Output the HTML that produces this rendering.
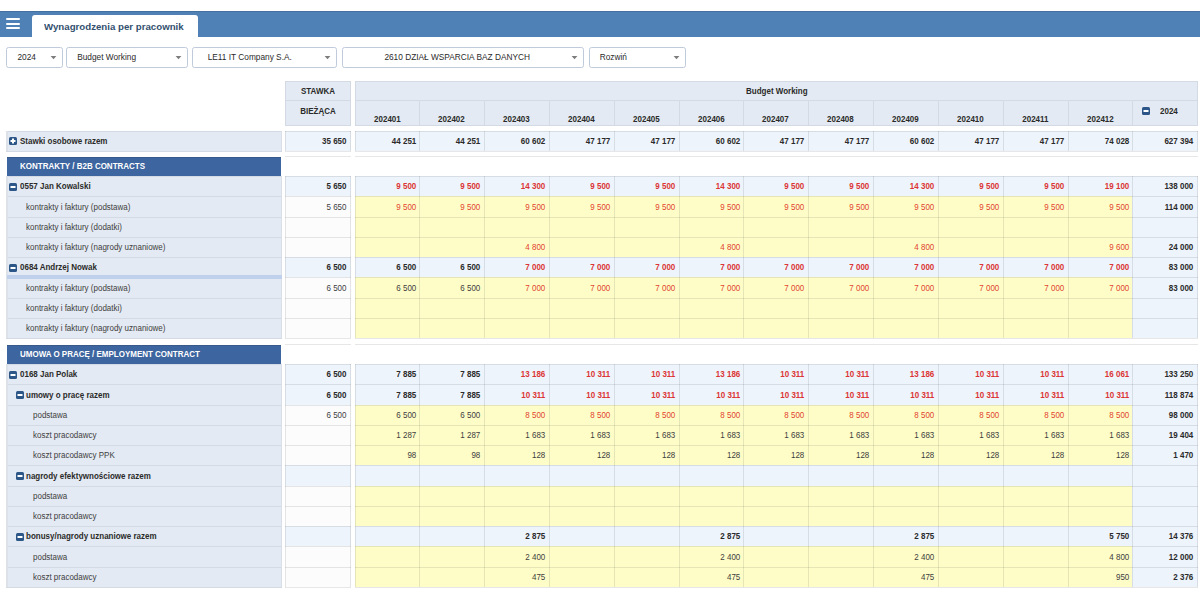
<!DOCTYPE html><html><head><meta charset="utf-8"><style>html,body{margin:0;padding:0}body{width:1200px;height:600px;overflow:hidden;background:#fff;position:relative;font-family:"Liberation Sans", sans-serif}.a{position:absolute}</style></head><body><div class="a" style="left:0.00px;top:11.00px;width:1200.00px;height:26.00px;background:#4f80b6;border-top:1px solid #44709f;box-sizing:border-box"></div>
<div class="a" style="left:6.00px;top:18.00px;width:13.50px;height:2.40px;background:#fff;border-radius:1px"></div>
<div class="a" style="left:6.00px;top:22.50px;width:13.50px;height:2.40px;background:#fff;border-radius:1px"></div>
<div class="a" style="left:6.00px;top:26.80px;width:13.50px;height:2.40px;background:#fff;border-radius:1px"></div>
<div class="a" style="left:32.00px;top:15.00px;width:166.00px;height:22.00px;background:#fff;border-radius:3px 3px 0 0"></div>
<div class="a" style="left:44.00px;top:16.20px;width:150.00px;height:22.00px;font-weight:bold;font-size:9.9px;transform:scaleX(0.98);transform-origin:left 50%;line-height:22px;color:#33506f;white-space:nowrap">Wynagrodzenia per pracownik</div>
<div class="a" style="left:6.00px;top:47.00px;width:57.00px;height:21.00px;border:1px solid #bfcadb;border-radius:2.5px;box-sizing:border-box;background:#fff"></div>
<div class="a" style="left:17.50px;top:47.00px;width:300.00px;height:21.00px;font-size:8.3px;line-height:21px;color:#2a2a2a;white-space:nowrap">2024</div>
<svg class="a" style="left:49.70px;top:55px" width="7" height="5"><path d="M0.6 1 L6.4 1 L3.5 4.2 Z" fill="#7d7d7d"/></svg>
<div class="a" style="left:66.00px;top:47.00px;width:122.00px;height:21.00px;border:1px solid #bfcadb;border-radius:2.5px;box-sizing:border-box;background:#fff"></div>
<div class="a" style="left:77.20px;top:47.00px;width:300.00px;height:21.00px;font-size:8.3px;line-height:21px;color:#2a2a2a;white-space:nowrap">Budget Working</div>
<svg class="a" style="left:174.70px;top:55px" width="7" height="5"><path d="M0.6 1 L6.4 1 L3.5 4.2 Z" fill="#7d7d7d"/></svg>
<div class="a" style="left:192.00px;top:47.00px;width:145.00px;height:21.00px;border:1px solid #bfcadb;border-radius:2.5px;box-sizing:border-box;background:#fff"></div>
<div class="a" style="left:207.70px;top:47.00px;width:300.00px;height:21.00px;font-size:8.3px;line-height:21px;color:#2a2a2a;white-space:nowrap">LE11 IT Company S.A.</div>
<svg class="a" style="left:323.70px;top:55px" width="7" height="5"><path d="M0.6 1 L6.4 1 L3.5 4.2 Z" fill="#7d7d7d"/></svg>
<div class="a" style="left:342.00px;top:47.00px;width:242.00px;height:21.00px;border:1px solid #bfcadb;border-radius:2.5px;box-sizing:border-box;background:#fff"></div>
<div class="a" style="left:384.40px;top:47.00px;width:300.00px;height:21.00px;font-size:8.3px;line-height:21px;color:#2a2a2a;white-space:nowrap">2610 DZIAŁ WSPARCIA BAZ DANYCH</div>
<svg class="a" style="left:570.70px;top:55px" width="7" height="5"><path d="M0.6 1 L6.4 1 L3.5 4.2 Z" fill="#7d7d7d"/></svg>
<div class="a" style="left:589.00px;top:47.00px;width:97.00px;height:21.00px;border:1px solid #bfcadb;border-radius:2.5px;box-sizing:border-box;background:#fff"></div>
<div class="a" style="left:599.70px;top:47.00px;width:300.00px;height:21.00px;font-size:8.3px;line-height:21px;color:#2a2a2a;white-space:nowrap">Rozwiń</div>
<svg class="a" style="left:672.70px;top:55px" width="7" height="5"><path d="M0.6 1 L6.4 1 L3.5 4.2 Z" fill="#7d7d7d"/></svg>
<div class="a" style="left:285px;top:81px;width:66px;height:45px;background:#e4eaf3"></div>
<div class="a" style="left:355px;top:81px;width:843px;height:45px;background:#e4eaf3"></div>
<div class="a" style="left:285px;top:81px;width:66px;height:1px;background:#d3dae4"></div>
<div class="a" style="left:285px;top:100px;width:66px;height:1px;background:#d3dae4"></div>
<div class="a" style="left:285px;top:125px;width:66px;height:1px;background:#d3dae4"></div>
<div class="a" style="left:285px;top:81px;width:1px;height:45px;background:#d3dae4"></div>
<div class="a" style="left:350px;top:81px;width:1px;height:45px;background:#d3dae4"></div>
<div class="a" style="left:355px;top:81px;width:843px;height:1px;background:#d3dae4"></div>
<div class="a" style="left:355px;top:100px;width:843px;height:1px;background:#d3dae4"></div>
<div class="a" style="left:355px;top:125px;width:843px;height:1px;background:#d3dae4"></div>
<div class="a" style="left:355px;top:81px;width:1px;height:45px;background:#d3dae4"></div>
<div class="a" style="left:1197px;top:81px;width:1px;height:45px;background:#d3dae4"></div>
<div class="a" style="left:419px;top:100px;width:1px;height:25px;background:#d3dae4"></div>
<div class="a" style="left:484px;top:100px;width:1px;height:25px;background:#d3dae4"></div>
<div class="a" style="left:549px;top:100px;width:1px;height:25px;background:#d3dae4"></div>
<div class="a" style="left:614px;top:100px;width:1px;height:25px;background:#d3dae4"></div>
<div class="a" style="left:679px;top:100px;width:1px;height:25px;background:#d3dae4"></div>
<div class="a" style="left:743px;top:100px;width:1px;height:25px;background:#d3dae4"></div>
<div class="a" style="left:808px;top:100px;width:1px;height:25px;background:#d3dae4"></div>
<div class="a" style="left:873px;top:100px;width:1px;height:25px;background:#d3dae4"></div>
<div class="a" style="left:938px;top:100px;width:1px;height:25px;background:#d3dae4"></div>
<div class="a" style="left:1003px;top:100px;width:1px;height:25px;background:#d3dae4"></div>
<div class="a" style="left:1068px;top:100px;width:1px;height:25px;background:#d3dae4"></div>
<div class="a" style="left:1132px;top:100px;width:1px;height:25px;background:#d3dae4"></div>
<div class="a" style="left:285.00px;top:81.49px;width:66.00px;height:20.00px;font-weight:bold;font-size:8.45px;transform:scaleX(0.947);transform-origin:center 50%;color:#2a2a2a;text-align:center;white-space:nowrap;line-height:20px">STAWKA</div>
<div class="a" style="left:285.00px;top:101.49px;width:66.00px;height:20.00px;font-weight:bold;font-size:8.45px;transform:scaleX(0.947);transform-origin:center 50%;color:#2a2a2a;text-align:center;white-space:nowrap;line-height:20px">BIEŻĄCA</div>
<div class="a" style="left:354.50px;top:81.39px;width:843.66px;height:20.00px;font-weight:bold;font-size:8.45px;transform:scaleX(0.947);transform-origin:center 50%;color:#2a2a2a;text-align:center;white-space:nowrap;line-height:20px">Budget Working</div>
<div class="a" style="left:354.50px;top:109.49px;width:64.82px;height:20.00px;font-weight:bold;font-size:8.45px;transform:scaleX(0.947);transform-origin:center 50%;color:#2a2a2a;text-align:center;white-space:nowrap;line-height:20px">202401</div>
<div class="a" style="left:419.32px;top:109.49px;width:64.82px;height:20.00px;font-weight:bold;font-size:8.45px;transform:scaleX(0.947);transform-origin:center 50%;color:#2a2a2a;text-align:center;white-space:nowrap;line-height:20px">202402</div>
<div class="a" style="left:484.14px;top:109.49px;width:64.82px;height:20.00px;font-weight:bold;font-size:8.45px;transform:scaleX(0.947);transform-origin:center 50%;color:#2a2a2a;text-align:center;white-space:nowrap;line-height:20px">202403</div>
<div class="a" style="left:548.96px;top:109.49px;width:64.82px;height:20.00px;font-weight:bold;font-size:8.45px;transform:scaleX(0.947);transform-origin:center 50%;color:#2a2a2a;text-align:center;white-space:nowrap;line-height:20px">202404</div>
<div class="a" style="left:613.78px;top:109.49px;width:64.82px;height:20.00px;font-weight:bold;font-size:8.45px;transform:scaleX(0.947);transform-origin:center 50%;color:#2a2a2a;text-align:center;white-space:nowrap;line-height:20px">202405</div>
<div class="a" style="left:678.60px;top:109.49px;width:64.82px;height:20.00px;font-weight:bold;font-size:8.45px;transform:scaleX(0.947);transform-origin:center 50%;color:#2a2a2a;text-align:center;white-space:nowrap;line-height:20px">202406</div>
<div class="a" style="left:743.42px;top:109.49px;width:64.82px;height:20.00px;font-weight:bold;font-size:8.45px;transform:scaleX(0.947);transform-origin:center 50%;color:#2a2a2a;text-align:center;white-space:nowrap;line-height:20px">202407</div>
<div class="a" style="left:808.24px;top:109.49px;width:64.82px;height:20.00px;font-weight:bold;font-size:8.45px;transform:scaleX(0.947);transform-origin:center 50%;color:#2a2a2a;text-align:center;white-space:nowrap;line-height:20px">202408</div>
<div class="a" style="left:873.06px;top:109.49px;width:64.82px;height:20.00px;font-weight:bold;font-size:8.45px;transform:scaleX(0.947);transform-origin:center 50%;color:#2a2a2a;text-align:center;white-space:nowrap;line-height:20px">202409</div>
<div class="a" style="left:937.88px;top:109.49px;width:64.82px;height:20.00px;font-weight:bold;font-size:8.45px;transform:scaleX(0.947);transform-origin:center 50%;color:#2a2a2a;text-align:center;white-space:nowrap;line-height:20px">202410</div>
<div class="a" style="left:1002.70px;top:109.49px;width:64.82px;height:20.00px;font-weight:bold;font-size:8.45px;transform:scaleX(0.947);transform-origin:center 50%;color:#2a2a2a;text-align:center;white-space:nowrap;line-height:20px">202411</div>
<div class="a" style="left:1067.52px;top:109.49px;width:64.82px;height:20.00px;font-weight:bold;font-size:8.45px;transform:scaleX(0.947);transform-origin:center 50%;color:#2a2a2a;text-align:center;white-space:nowrap;line-height:20px">202412</div>
<svg class="a" style="left:1142px;top:107px" width="8" height="8" viewBox="0 0 8 8"><rect x="0" y="0" width="8" height="8" rx="1.5" fill="#2b5687"/><rect x="1.5" y="3" width="5" height="2" fill="#fff"/></svg>
<div class="a" style="left:1159.50px;top:100.99px;width:40.00px;height:20.00px;font-weight:bold;font-size:8.45px;transform:scaleX(0.947);transform-origin:left 50%;color:#2a2a2a;text-align:center;white-space:nowrap;text-align:left;line-height:20px">2024</div>
<div class="a" style="left:6px;top:131px;width:276px;height:20px;background:#e4eaf3"></div>
<div class="a" style="left:8px;top:131px;width:274px;height:1px;background:#d3dae4"></div>
<div class="a" style="left:6px;top:131px;width:2px;height:20px;background:#dde2e9"></div>
<div class="a" style="left:281px;top:131px;width:1px;height:20px;background:#d9dfe8"></div>
<svg class="a" style="left:9px;top:137px" width="8" height="8" viewBox="0 0 8 8"><rect x="0" y="0" width="8" height="8" rx="1.5" fill="#2b5687"/><rect x="1.5" y="3" width="5" height="2" fill="#fff"/><rect x="3" y="1.5" width="2" height="5" fill="#fff"/></svg>
<div class="a" style="left:20.40px;top:131.19px;width:250.00px;height:20.00px;font-weight:bold;color:#2a2a2a;font-size:8.45px;transform:scaleX(0.947);transform-origin:left 50%;white-space:nowrap;line-height:20px">Stawki osobowe razem</div>
<div class="a" style="left:285px;top:131px;width:66px;height:20px;background:#eef4fc"></div>
<div class="a" style="left:285px;top:131px;width:66px;height:1px;background:rgba(0,0,0,0.095)"></div>
<div class="a" style="left:285px;top:131px;width:1px;height:20px;background:rgba(0,0,0,0.095)"></div>
<div class="a" style="left:350px;top:131px;width:1px;height:20px;background:rgba(0,0,0,0.095)"></div>
<div class="a" style="left:285.00px;top:131.19px;width:61.50px;height:20.00px;font-size:8.45px;transform:scaleX(0.947);transform-origin:right 50%;white-space:nowrap;text-align:right;font-weight:bold;color:#2a2a2a;line-height:20px">35 650</div>
<div class="a" style="left:355px;top:131px;width:777px;height:20px;background:#eef4fc"></div>
<div class="a" style="left:1132px;top:131px;width:66px;height:20px;background:#eef4fc"></div>
<div class="a" style="left:355px;top:131px;width:843px;height:1px;background:rgba(0,0,0,0.095)"></div>
<div class="a" style="left:355px;top:131px;width:1px;height:20px;background:rgba(0,0,0,0.095)"></div>
<div class="a" style="left:419px;top:131px;width:1px;height:20px;background:rgba(0,0,0,0.095)"></div>
<div class="a" style="left:484px;top:131px;width:1px;height:20px;background:rgba(0,0,0,0.095)"></div>
<div class="a" style="left:549px;top:131px;width:1px;height:20px;background:rgba(0,0,0,0.095)"></div>
<div class="a" style="left:614px;top:131px;width:1px;height:20px;background:rgba(0,0,0,0.095)"></div>
<div class="a" style="left:679px;top:131px;width:1px;height:20px;background:rgba(0,0,0,0.095)"></div>
<div class="a" style="left:743px;top:131px;width:1px;height:20px;background:rgba(0,0,0,0.095)"></div>
<div class="a" style="left:808px;top:131px;width:1px;height:20px;background:rgba(0,0,0,0.095)"></div>
<div class="a" style="left:873px;top:131px;width:1px;height:20px;background:rgba(0,0,0,0.095)"></div>
<div class="a" style="left:938px;top:131px;width:1px;height:20px;background:rgba(0,0,0,0.095)"></div>
<div class="a" style="left:1003px;top:131px;width:1px;height:20px;background:rgba(0,0,0,0.095)"></div>
<div class="a" style="left:1068px;top:131px;width:1px;height:20px;background:rgba(0,0,0,0.095)"></div>
<div class="a" style="left:1132px;top:131px;width:1px;height:20px;background:rgba(0,0,0,0.095)"></div>
<div class="a" style="left:1197px;top:131px;width:1px;height:20px;background:rgba(0,0,0,0.095)"></div>
<div class="a" style="left:354.50px;top:131.19px;width:61.32px;height:20.00px;font-size:8.45px;transform:scaleX(0.947);transform-origin:right 50%;white-space:nowrap;text-align:right;font-weight:bold;color:#2a2a2a;line-height:20px">44 251</div>
<div class="a" style="left:419.32px;top:131.19px;width:61.32px;height:20.00px;font-size:8.45px;transform:scaleX(0.947);transform-origin:right 50%;white-space:nowrap;text-align:right;font-weight:bold;color:#2a2a2a;line-height:20px">44 251</div>
<div class="a" style="left:484.14px;top:131.19px;width:61.32px;height:20.00px;font-size:8.45px;transform:scaleX(0.947);transform-origin:right 50%;white-space:nowrap;text-align:right;font-weight:bold;color:#2a2a2a;line-height:20px">60 602</div>
<div class="a" style="left:548.96px;top:131.19px;width:61.32px;height:20.00px;font-size:8.45px;transform:scaleX(0.947);transform-origin:right 50%;white-space:nowrap;text-align:right;font-weight:bold;color:#2a2a2a;line-height:20px">47 177</div>
<div class="a" style="left:613.78px;top:131.19px;width:61.32px;height:20.00px;font-size:8.45px;transform:scaleX(0.947);transform-origin:right 50%;white-space:nowrap;text-align:right;font-weight:bold;color:#2a2a2a;line-height:20px">47 177</div>
<div class="a" style="left:678.60px;top:131.19px;width:61.32px;height:20.00px;font-size:8.45px;transform:scaleX(0.947);transform-origin:right 50%;white-space:nowrap;text-align:right;font-weight:bold;color:#2a2a2a;line-height:20px">60 602</div>
<div class="a" style="left:743.42px;top:131.19px;width:61.32px;height:20.00px;font-size:8.45px;transform:scaleX(0.947);transform-origin:right 50%;white-space:nowrap;text-align:right;font-weight:bold;color:#2a2a2a;line-height:20px">47 177</div>
<div class="a" style="left:808.24px;top:131.19px;width:61.32px;height:20.00px;font-size:8.45px;transform:scaleX(0.947);transform-origin:right 50%;white-space:nowrap;text-align:right;font-weight:bold;color:#2a2a2a;line-height:20px">47 177</div>
<div class="a" style="left:873.06px;top:131.19px;width:61.32px;height:20.00px;font-size:8.45px;transform:scaleX(0.947);transform-origin:right 50%;white-space:nowrap;text-align:right;font-weight:bold;color:#2a2a2a;line-height:20px">60 602</div>
<div class="a" style="left:937.88px;top:131.19px;width:61.32px;height:20.00px;font-size:8.45px;transform:scaleX(0.947);transform-origin:right 50%;white-space:nowrap;text-align:right;font-weight:bold;color:#2a2a2a;line-height:20px">47 177</div>
<div class="a" style="left:1002.70px;top:131.19px;width:61.32px;height:20.00px;font-size:8.45px;transform:scaleX(0.947);transform-origin:right 50%;white-space:nowrap;text-align:right;font-weight:bold;color:#2a2a2a;line-height:20px">47 177</div>
<div class="a" style="left:1067.52px;top:131.19px;width:61.32px;height:20.00px;font-size:8.45px;transform:scaleX(0.947);transform-origin:right 50%;white-space:nowrap;text-align:right;font-weight:bold;color:#2a2a2a;line-height:20px">74 028</div>
<div class="a" style="left:1132.34px;top:131.19px;width:61.32px;height:20.00px;font-size:8.45px;transform:scaleX(0.947);transform-origin:right 50%;white-space:nowrap;text-align:right;font-weight:bold;color:#2a2a2a;line-height:20px">627 394</div>
<div class="a" style="left:7px;top:157px;width:274px;height:19px;background:#3d65a0"></div>
<div class="a" style="left:7px;top:157px;width:274px;height:1px;background:#39598a"></div>
<div class="a" style="left:19.50px;top:156.19px;width:260.00px;height:20.00px;font-weight:bold;color:#fff;font-size:8.45px;transform:scaleX(0.947);transform-origin:left 50%;white-space:nowrap;line-height:20px">KONTRAKTY / B2B CONTRACTS</div>
<div class="a" style="left:285px;top:156px;width:66px;height:1px;background:rgba(0,0,0,0.095)"></div>
<div class="a" style="left:355px;top:156px;width:843px;height:1px;background:rgba(0,0,0,0.095)"></div>
<div class="a" style="left:6px;top:176px;width:276px;height:20px;background:#e4eaf3"></div>
<div class="a" style="left:8px;top:176px;width:274px;height:1px;background:#d3dae4"></div>
<div class="a" style="left:6px;top:176px;width:2px;height:20px;background:#dde2e9"></div>
<div class="a" style="left:281px;top:176px;width:1px;height:20px;background:#d9dfe8"></div>
<svg class="a" style="left:9px;top:183px" width="8" height="8" viewBox="0 0 8 8"><rect x="0" y="0" width="8" height="8" rx="1.5" fill="#2b5687"/><rect x="1.5" y="3" width="5" height="2" fill="#fff"/></svg>
<div class="a" style="left:19.50px;top:176.32px;width:250.00px;height:20.00px;font-weight:bold;color:#2a2a2a;font-size:8.45px;transform:scaleX(0.947);transform-origin:left 50%;white-space:nowrap;line-height:20px">0557 Jan Kowalski</div>
<div class="a" style="left:285px;top:176px;width:66px;height:20px;background:#eef4fc"></div>
<div class="a" style="left:285px;top:176px;width:66px;height:1px;background:rgba(0,0,0,0.095)"></div>
<div class="a" style="left:285px;top:176px;width:1px;height:20px;background:rgba(0,0,0,0.095)"></div>
<div class="a" style="left:350px;top:176px;width:1px;height:20px;background:rgba(0,0,0,0.095)"></div>
<div class="a" style="left:285.00px;top:176.32px;width:61.50px;height:20.00px;font-size:8.45px;transform:scaleX(0.947);transform-origin:right 50%;white-space:nowrap;text-align:right;font-weight:bold;color:#2a2a2a;line-height:20px">5 650</div>
<div class="a" style="left:355px;top:176px;width:777px;height:20px;background:#eef4fc"></div>
<div class="a" style="left:1132px;top:176px;width:66px;height:20px;background:#eef4fc"></div>
<div class="a" style="left:355px;top:176px;width:843px;height:1px;background:rgba(0,0,0,0.095)"></div>
<div class="a" style="left:355px;top:176px;width:1px;height:20px;background:rgba(0,0,0,0.095)"></div>
<div class="a" style="left:419px;top:176px;width:1px;height:20px;background:rgba(0,0,0,0.095)"></div>
<div class="a" style="left:484px;top:176px;width:1px;height:20px;background:rgba(0,0,0,0.095)"></div>
<div class="a" style="left:549px;top:176px;width:1px;height:20px;background:rgba(0,0,0,0.095)"></div>
<div class="a" style="left:614px;top:176px;width:1px;height:20px;background:rgba(0,0,0,0.095)"></div>
<div class="a" style="left:679px;top:176px;width:1px;height:20px;background:rgba(0,0,0,0.095)"></div>
<div class="a" style="left:743px;top:176px;width:1px;height:20px;background:rgba(0,0,0,0.095)"></div>
<div class="a" style="left:808px;top:176px;width:1px;height:20px;background:rgba(0,0,0,0.095)"></div>
<div class="a" style="left:873px;top:176px;width:1px;height:20px;background:rgba(0,0,0,0.095)"></div>
<div class="a" style="left:938px;top:176px;width:1px;height:20px;background:rgba(0,0,0,0.095)"></div>
<div class="a" style="left:1003px;top:176px;width:1px;height:20px;background:rgba(0,0,0,0.095)"></div>
<div class="a" style="left:1068px;top:176px;width:1px;height:20px;background:rgba(0,0,0,0.095)"></div>
<div class="a" style="left:1132px;top:176px;width:1px;height:20px;background:rgba(0,0,0,0.095)"></div>
<div class="a" style="left:1197px;top:176px;width:1px;height:20px;background:rgba(0,0,0,0.095)"></div>
<div class="a" style="left:354.50px;top:176.32px;width:61.32px;height:20.00px;font-size:8.45px;transform:scaleX(0.947);transform-origin:right 50%;white-space:nowrap;text-align:right;font-weight:bold;color:#dc3434;line-height:20px">9 500</div>
<div class="a" style="left:419.32px;top:176.32px;width:61.32px;height:20.00px;font-size:8.45px;transform:scaleX(0.947);transform-origin:right 50%;white-space:nowrap;text-align:right;font-weight:bold;color:#dc3434;line-height:20px">9 500</div>
<div class="a" style="left:484.14px;top:176.32px;width:61.32px;height:20.00px;font-size:8.45px;transform:scaleX(0.947);transform-origin:right 50%;white-space:nowrap;text-align:right;font-weight:bold;color:#dc3434;line-height:20px">14 300</div>
<div class="a" style="left:548.96px;top:176.32px;width:61.32px;height:20.00px;font-size:8.45px;transform:scaleX(0.947);transform-origin:right 50%;white-space:nowrap;text-align:right;font-weight:bold;color:#dc3434;line-height:20px">9 500</div>
<div class="a" style="left:613.78px;top:176.32px;width:61.32px;height:20.00px;font-size:8.45px;transform:scaleX(0.947);transform-origin:right 50%;white-space:nowrap;text-align:right;font-weight:bold;color:#dc3434;line-height:20px">9 500</div>
<div class="a" style="left:678.60px;top:176.32px;width:61.32px;height:20.00px;font-size:8.45px;transform:scaleX(0.947);transform-origin:right 50%;white-space:nowrap;text-align:right;font-weight:bold;color:#dc3434;line-height:20px">14 300</div>
<div class="a" style="left:743.42px;top:176.32px;width:61.32px;height:20.00px;font-size:8.45px;transform:scaleX(0.947);transform-origin:right 50%;white-space:nowrap;text-align:right;font-weight:bold;color:#dc3434;line-height:20px">9 500</div>
<div class="a" style="left:808.24px;top:176.32px;width:61.32px;height:20.00px;font-size:8.45px;transform:scaleX(0.947);transform-origin:right 50%;white-space:nowrap;text-align:right;font-weight:bold;color:#dc3434;line-height:20px">9 500</div>
<div class="a" style="left:873.06px;top:176.32px;width:61.32px;height:20.00px;font-size:8.45px;transform:scaleX(0.947);transform-origin:right 50%;white-space:nowrap;text-align:right;font-weight:bold;color:#dc3434;line-height:20px">14 300</div>
<div class="a" style="left:937.88px;top:176.32px;width:61.32px;height:20.00px;font-size:8.45px;transform:scaleX(0.947);transform-origin:right 50%;white-space:nowrap;text-align:right;font-weight:bold;color:#dc3434;line-height:20px">9 500</div>
<div class="a" style="left:1002.70px;top:176.32px;width:61.32px;height:20.00px;font-size:8.45px;transform:scaleX(0.947);transform-origin:right 50%;white-space:nowrap;text-align:right;font-weight:bold;color:#dc3434;line-height:20px">9 500</div>
<div class="a" style="left:1067.52px;top:176.32px;width:61.32px;height:20.00px;font-size:8.45px;transform:scaleX(0.947);transform-origin:right 50%;white-space:nowrap;text-align:right;font-weight:bold;color:#dc3434;line-height:20px">19 100</div>
<div class="a" style="left:1132.34px;top:176.32px;width:61.32px;height:20.00px;font-size:8.45px;transform:scaleX(0.947);transform-origin:right 50%;white-space:nowrap;text-align:right;font-weight:bold;color:#2a2a2a;line-height:20px">138 000</div>
<div class="a" style="left:6px;top:196px;width:276px;height:21px;background:#e4eaf3"></div>
<div class="a" style="left:8px;top:196px;width:274px;height:1px;background:#d3dae4"></div>
<div class="a" style="left:6px;top:196px;width:2px;height:21px;background:#dde2e9"></div>
<div class="a" style="left:281px;top:196px;width:1px;height:21px;background:#d9dfe8"></div>
<div class="a" style="left:26.00px;top:196.57px;width:250.00px;height:20.00px;color:#3e3e3e;font-size:8.45px;transform:scaleX(0.947);transform-origin:left 50%;white-space:nowrap;line-height:20px">kontrakty i faktury (podstawa)</div>
<div class="a" style="left:285px;top:196px;width:66px;height:21px;background:#fcfcfd"></div>
<div class="a" style="left:285px;top:196px;width:66px;height:1px;background:rgba(0,0,0,0.095)"></div>
<div class="a" style="left:285px;top:196px;width:1px;height:21px;background:rgba(0,0,0,0.095)"></div>
<div class="a" style="left:350px;top:196px;width:1px;height:21px;background:rgba(0,0,0,0.095)"></div>
<div class="a" style="left:285.00px;top:196.57px;width:61.50px;height:20.00px;font-size:8.45px;transform:scaleX(0.947);transform-origin:right 50%;white-space:nowrap;text-align:right;color:#3e3e3e;line-height:20px">5 650</div>
<div class="a" style="left:355px;top:196px;width:777px;height:21px;background:#fefdc8"></div>
<div class="a" style="left:1132px;top:196px;width:66px;height:21px;background:#eef4fc"></div>
<div class="a" style="left:355px;top:196px;width:843px;height:1px;background:rgba(0,0,0,0.095)"></div>
<div class="a" style="left:355px;top:196px;width:1px;height:21px;background:rgba(0,0,0,0.095)"></div>
<div class="a" style="left:419px;top:196px;width:1px;height:21px;background:rgba(0,0,0,0.095)"></div>
<div class="a" style="left:484px;top:196px;width:1px;height:21px;background:rgba(0,0,0,0.095)"></div>
<div class="a" style="left:549px;top:196px;width:1px;height:21px;background:rgba(0,0,0,0.095)"></div>
<div class="a" style="left:614px;top:196px;width:1px;height:21px;background:rgba(0,0,0,0.095)"></div>
<div class="a" style="left:679px;top:196px;width:1px;height:21px;background:rgba(0,0,0,0.095)"></div>
<div class="a" style="left:743px;top:196px;width:1px;height:21px;background:rgba(0,0,0,0.095)"></div>
<div class="a" style="left:808px;top:196px;width:1px;height:21px;background:rgba(0,0,0,0.095)"></div>
<div class="a" style="left:873px;top:196px;width:1px;height:21px;background:rgba(0,0,0,0.095)"></div>
<div class="a" style="left:938px;top:196px;width:1px;height:21px;background:rgba(0,0,0,0.095)"></div>
<div class="a" style="left:1003px;top:196px;width:1px;height:21px;background:rgba(0,0,0,0.095)"></div>
<div class="a" style="left:1068px;top:196px;width:1px;height:21px;background:rgba(0,0,0,0.095)"></div>
<div class="a" style="left:1132px;top:196px;width:1px;height:21px;background:rgba(0,0,0,0.095)"></div>
<div class="a" style="left:1197px;top:196px;width:1px;height:21px;background:rgba(0,0,0,0.095)"></div>
<div class="a" style="left:354.50px;top:196.57px;width:61.32px;height:20.00px;font-size:8.45px;transform:scaleX(0.947);transform-origin:right 50%;white-space:nowrap;text-align:right;color:#e2452f;line-height:20px">9 500</div>
<div class="a" style="left:419.32px;top:196.57px;width:61.32px;height:20.00px;font-size:8.45px;transform:scaleX(0.947);transform-origin:right 50%;white-space:nowrap;text-align:right;color:#e2452f;line-height:20px">9 500</div>
<div class="a" style="left:484.14px;top:196.57px;width:61.32px;height:20.00px;font-size:8.45px;transform:scaleX(0.947);transform-origin:right 50%;white-space:nowrap;text-align:right;color:#e2452f;line-height:20px">9 500</div>
<div class="a" style="left:548.96px;top:196.57px;width:61.32px;height:20.00px;font-size:8.45px;transform:scaleX(0.947);transform-origin:right 50%;white-space:nowrap;text-align:right;color:#e2452f;line-height:20px">9 500</div>
<div class="a" style="left:613.78px;top:196.57px;width:61.32px;height:20.00px;font-size:8.45px;transform:scaleX(0.947);transform-origin:right 50%;white-space:nowrap;text-align:right;color:#e2452f;line-height:20px">9 500</div>
<div class="a" style="left:678.60px;top:196.57px;width:61.32px;height:20.00px;font-size:8.45px;transform:scaleX(0.947);transform-origin:right 50%;white-space:nowrap;text-align:right;color:#e2452f;line-height:20px">9 500</div>
<div class="a" style="left:743.42px;top:196.57px;width:61.32px;height:20.00px;font-size:8.45px;transform:scaleX(0.947);transform-origin:right 50%;white-space:nowrap;text-align:right;color:#e2452f;line-height:20px">9 500</div>
<div class="a" style="left:808.24px;top:196.57px;width:61.32px;height:20.00px;font-size:8.45px;transform:scaleX(0.947);transform-origin:right 50%;white-space:nowrap;text-align:right;color:#e2452f;line-height:20px">9 500</div>
<div class="a" style="left:873.06px;top:196.57px;width:61.32px;height:20.00px;font-size:8.45px;transform:scaleX(0.947);transform-origin:right 50%;white-space:nowrap;text-align:right;color:#e2452f;line-height:20px">9 500</div>
<div class="a" style="left:937.88px;top:196.57px;width:61.32px;height:20.00px;font-size:8.45px;transform:scaleX(0.947);transform-origin:right 50%;white-space:nowrap;text-align:right;color:#e2452f;line-height:20px">9 500</div>
<div class="a" style="left:1002.70px;top:196.57px;width:61.32px;height:20.00px;font-size:8.45px;transform:scaleX(0.947);transform-origin:right 50%;white-space:nowrap;text-align:right;color:#e2452f;line-height:20px">9 500</div>
<div class="a" style="left:1067.52px;top:196.57px;width:61.32px;height:20.00px;font-size:8.45px;transform:scaleX(0.947);transform-origin:right 50%;white-space:nowrap;text-align:right;color:#e2452f;line-height:20px">9 500</div>
<div class="a" style="left:1132.34px;top:196.57px;width:61.32px;height:20.00px;font-size:8.45px;transform:scaleX(0.947);transform-origin:right 50%;white-space:nowrap;text-align:right;font-weight:bold;color:#2a2a2a;line-height:20px">114 000</div>
<div class="a" style="left:6px;top:217px;width:276px;height:20px;background:#e4eaf3"></div>
<div class="a" style="left:8px;top:217px;width:274px;height:1px;background:#d3dae4"></div>
<div class="a" style="left:6px;top:217px;width:2px;height:20px;background:#dde2e9"></div>
<div class="a" style="left:281px;top:217px;width:1px;height:20px;background:#d9dfe8"></div>
<div class="a" style="left:26.00px;top:216.82px;width:250.00px;height:20.00px;color:#3e3e3e;font-size:8.45px;transform:scaleX(0.947);transform-origin:left 50%;white-space:nowrap;line-height:20px">kontrakty i faktury (dodatki)</div>
<div class="a" style="left:285px;top:217px;width:66px;height:20px;background:#fcfcfd"></div>
<div class="a" style="left:285px;top:217px;width:66px;height:1px;background:rgba(0,0,0,0.095)"></div>
<div class="a" style="left:285px;top:217px;width:1px;height:20px;background:rgba(0,0,0,0.095)"></div>
<div class="a" style="left:350px;top:217px;width:1px;height:20px;background:rgba(0,0,0,0.095)"></div>
<div class="a" style="left:355px;top:217px;width:777px;height:20px;background:#fefdc8"></div>
<div class="a" style="left:1132px;top:217px;width:66px;height:20px;background:#eef4fc"></div>
<div class="a" style="left:355px;top:217px;width:843px;height:1px;background:rgba(0,0,0,0.095)"></div>
<div class="a" style="left:355px;top:217px;width:1px;height:20px;background:rgba(0,0,0,0.095)"></div>
<div class="a" style="left:419px;top:217px;width:1px;height:20px;background:rgba(0,0,0,0.095)"></div>
<div class="a" style="left:484px;top:217px;width:1px;height:20px;background:rgba(0,0,0,0.095)"></div>
<div class="a" style="left:549px;top:217px;width:1px;height:20px;background:rgba(0,0,0,0.095)"></div>
<div class="a" style="left:614px;top:217px;width:1px;height:20px;background:rgba(0,0,0,0.095)"></div>
<div class="a" style="left:679px;top:217px;width:1px;height:20px;background:rgba(0,0,0,0.095)"></div>
<div class="a" style="left:743px;top:217px;width:1px;height:20px;background:rgba(0,0,0,0.095)"></div>
<div class="a" style="left:808px;top:217px;width:1px;height:20px;background:rgba(0,0,0,0.095)"></div>
<div class="a" style="left:873px;top:217px;width:1px;height:20px;background:rgba(0,0,0,0.095)"></div>
<div class="a" style="left:938px;top:217px;width:1px;height:20px;background:rgba(0,0,0,0.095)"></div>
<div class="a" style="left:1003px;top:217px;width:1px;height:20px;background:rgba(0,0,0,0.095)"></div>
<div class="a" style="left:1068px;top:217px;width:1px;height:20px;background:rgba(0,0,0,0.095)"></div>
<div class="a" style="left:1132px;top:217px;width:1px;height:20px;background:rgba(0,0,0,0.095)"></div>
<div class="a" style="left:1197px;top:217px;width:1px;height:20px;background:rgba(0,0,0,0.095)"></div>
<div class="a" style="left:6px;top:237px;width:276px;height:20px;background:#e4eaf3"></div>
<div class="a" style="left:8px;top:237px;width:274px;height:1px;background:#d3dae4"></div>
<div class="a" style="left:6px;top:237px;width:2px;height:20px;background:#dde2e9"></div>
<div class="a" style="left:281px;top:237px;width:1px;height:20px;background:#d9dfe8"></div>
<div class="a" style="left:26.00px;top:237.07px;width:250.00px;height:20.00px;color:#3e3e3e;font-size:8.45px;transform:scaleX(0.947);transform-origin:left 50%;white-space:nowrap;line-height:20px">kontrakty i faktury (nagrody uznaniowe)</div>
<div class="a" style="left:285px;top:237px;width:66px;height:20px;background:#fcfcfd"></div>
<div class="a" style="left:285px;top:237px;width:66px;height:1px;background:rgba(0,0,0,0.095)"></div>
<div class="a" style="left:285px;top:237px;width:1px;height:20px;background:rgba(0,0,0,0.095)"></div>
<div class="a" style="left:350px;top:237px;width:1px;height:20px;background:rgba(0,0,0,0.095)"></div>
<div class="a" style="left:355px;top:237px;width:777px;height:20px;background:#fefdc8"></div>
<div class="a" style="left:1132px;top:237px;width:66px;height:20px;background:#eef4fc"></div>
<div class="a" style="left:355px;top:237px;width:843px;height:1px;background:rgba(0,0,0,0.095)"></div>
<div class="a" style="left:355px;top:237px;width:1px;height:20px;background:rgba(0,0,0,0.095)"></div>
<div class="a" style="left:419px;top:237px;width:1px;height:20px;background:rgba(0,0,0,0.095)"></div>
<div class="a" style="left:484px;top:237px;width:1px;height:20px;background:rgba(0,0,0,0.095)"></div>
<div class="a" style="left:549px;top:237px;width:1px;height:20px;background:rgba(0,0,0,0.095)"></div>
<div class="a" style="left:614px;top:237px;width:1px;height:20px;background:rgba(0,0,0,0.095)"></div>
<div class="a" style="left:679px;top:237px;width:1px;height:20px;background:rgba(0,0,0,0.095)"></div>
<div class="a" style="left:743px;top:237px;width:1px;height:20px;background:rgba(0,0,0,0.095)"></div>
<div class="a" style="left:808px;top:237px;width:1px;height:20px;background:rgba(0,0,0,0.095)"></div>
<div class="a" style="left:873px;top:237px;width:1px;height:20px;background:rgba(0,0,0,0.095)"></div>
<div class="a" style="left:938px;top:237px;width:1px;height:20px;background:rgba(0,0,0,0.095)"></div>
<div class="a" style="left:1003px;top:237px;width:1px;height:20px;background:rgba(0,0,0,0.095)"></div>
<div class="a" style="left:1068px;top:237px;width:1px;height:20px;background:rgba(0,0,0,0.095)"></div>
<div class="a" style="left:1132px;top:237px;width:1px;height:20px;background:rgba(0,0,0,0.095)"></div>
<div class="a" style="left:1197px;top:237px;width:1px;height:20px;background:rgba(0,0,0,0.095)"></div>
<div class="a" style="left:484.14px;top:237.07px;width:61.32px;height:20.00px;font-size:8.45px;transform:scaleX(0.947);transform-origin:right 50%;white-space:nowrap;text-align:right;color:#e2452f;line-height:20px">4 800</div>
<div class="a" style="left:678.60px;top:237.07px;width:61.32px;height:20.00px;font-size:8.45px;transform:scaleX(0.947);transform-origin:right 50%;white-space:nowrap;text-align:right;color:#e2452f;line-height:20px">4 800</div>
<div class="a" style="left:873.06px;top:237.07px;width:61.32px;height:20.00px;font-size:8.45px;transform:scaleX(0.947);transform-origin:right 50%;white-space:nowrap;text-align:right;color:#e2452f;line-height:20px">4 800</div>
<div class="a" style="left:1067.52px;top:237.07px;width:61.32px;height:20.00px;font-size:8.45px;transform:scaleX(0.947);transform-origin:right 50%;white-space:nowrap;text-align:right;color:#e2452f;line-height:20px">9 600</div>
<div class="a" style="left:1132.34px;top:237.07px;width:61.32px;height:20.00px;font-size:8.45px;transform:scaleX(0.947);transform-origin:right 50%;white-space:nowrap;text-align:right;font-weight:bold;color:#2a2a2a;line-height:20px">24 000</div>
<div class="a" style="left:6px;top:257px;width:276px;height:20px;background:#e4eaf3"></div>
<div class="a" style="left:8px;top:257px;width:274px;height:1px;background:#d3dae4"></div>
<div class="a" style="left:6px;top:257px;width:2px;height:20px;background:#dde2e9"></div>
<div class="a" style="left:281px;top:257px;width:1px;height:20px;background:#d9dfe8"></div>
<svg class="a" style="left:9px;top:264px" width="8" height="8" viewBox="0 0 8 8"><rect x="0" y="0" width="8" height="8" rx="1.5" fill="#2b5687"/><rect x="1.5" y="3" width="5" height="2" fill="#fff"/></svg>
<div class="a" style="left:19.50px;top:257.32px;width:250.00px;height:20.00px;font-weight:bold;color:#2a2a2a;font-size:8.45px;transform:scaleX(0.947);transform-origin:left 50%;white-space:nowrap;line-height:20px">0684 Andrzej Nowak</div>
<div class="a" style="left:285px;top:257px;width:66px;height:20px;background:#eef4fc"></div>
<div class="a" style="left:285px;top:257px;width:66px;height:1px;background:rgba(0,0,0,0.095)"></div>
<div class="a" style="left:285px;top:257px;width:1px;height:20px;background:rgba(0,0,0,0.095)"></div>
<div class="a" style="left:350px;top:257px;width:1px;height:20px;background:rgba(0,0,0,0.095)"></div>
<div class="a" style="left:285.00px;top:257.32px;width:61.50px;height:20.00px;font-size:8.45px;transform:scaleX(0.947);transform-origin:right 50%;white-space:nowrap;text-align:right;font-weight:bold;color:#2a2a2a;line-height:20px">6 500</div>
<div class="a" style="left:355px;top:257px;width:777px;height:20px;background:#eef4fc"></div>
<div class="a" style="left:1132px;top:257px;width:66px;height:20px;background:#eef4fc"></div>
<div class="a" style="left:355px;top:257px;width:843px;height:1px;background:rgba(0,0,0,0.095)"></div>
<div class="a" style="left:355px;top:257px;width:1px;height:20px;background:rgba(0,0,0,0.095)"></div>
<div class="a" style="left:419px;top:257px;width:1px;height:20px;background:rgba(0,0,0,0.095)"></div>
<div class="a" style="left:484px;top:257px;width:1px;height:20px;background:rgba(0,0,0,0.095)"></div>
<div class="a" style="left:549px;top:257px;width:1px;height:20px;background:rgba(0,0,0,0.095)"></div>
<div class="a" style="left:614px;top:257px;width:1px;height:20px;background:rgba(0,0,0,0.095)"></div>
<div class="a" style="left:679px;top:257px;width:1px;height:20px;background:rgba(0,0,0,0.095)"></div>
<div class="a" style="left:743px;top:257px;width:1px;height:20px;background:rgba(0,0,0,0.095)"></div>
<div class="a" style="left:808px;top:257px;width:1px;height:20px;background:rgba(0,0,0,0.095)"></div>
<div class="a" style="left:873px;top:257px;width:1px;height:20px;background:rgba(0,0,0,0.095)"></div>
<div class="a" style="left:938px;top:257px;width:1px;height:20px;background:rgba(0,0,0,0.095)"></div>
<div class="a" style="left:1003px;top:257px;width:1px;height:20px;background:rgba(0,0,0,0.095)"></div>
<div class="a" style="left:1068px;top:257px;width:1px;height:20px;background:rgba(0,0,0,0.095)"></div>
<div class="a" style="left:1132px;top:257px;width:1px;height:20px;background:rgba(0,0,0,0.095)"></div>
<div class="a" style="left:1197px;top:257px;width:1px;height:20px;background:rgba(0,0,0,0.095)"></div>
<div class="a" style="left:354.50px;top:257.32px;width:61.32px;height:20.00px;font-size:8.45px;transform:scaleX(0.947);transform-origin:right 50%;white-space:nowrap;text-align:right;font-weight:bold;color:#2a2a2a;line-height:20px">6 500</div>
<div class="a" style="left:419.32px;top:257.32px;width:61.32px;height:20.00px;font-size:8.45px;transform:scaleX(0.947);transform-origin:right 50%;white-space:nowrap;text-align:right;font-weight:bold;color:#2a2a2a;line-height:20px">6 500</div>
<div class="a" style="left:484.14px;top:257.32px;width:61.32px;height:20.00px;font-size:8.45px;transform:scaleX(0.947);transform-origin:right 50%;white-space:nowrap;text-align:right;font-weight:bold;color:#dc3434;line-height:20px">7 000</div>
<div class="a" style="left:548.96px;top:257.32px;width:61.32px;height:20.00px;font-size:8.45px;transform:scaleX(0.947);transform-origin:right 50%;white-space:nowrap;text-align:right;font-weight:bold;color:#dc3434;line-height:20px">7 000</div>
<div class="a" style="left:613.78px;top:257.32px;width:61.32px;height:20.00px;font-size:8.45px;transform:scaleX(0.947);transform-origin:right 50%;white-space:nowrap;text-align:right;font-weight:bold;color:#dc3434;line-height:20px">7 000</div>
<div class="a" style="left:678.60px;top:257.32px;width:61.32px;height:20.00px;font-size:8.45px;transform:scaleX(0.947);transform-origin:right 50%;white-space:nowrap;text-align:right;font-weight:bold;color:#dc3434;line-height:20px">7 000</div>
<div class="a" style="left:743.42px;top:257.32px;width:61.32px;height:20.00px;font-size:8.45px;transform:scaleX(0.947);transform-origin:right 50%;white-space:nowrap;text-align:right;font-weight:bold;color:#dc3434;line-height:20px">7 000</div>
<div class="a" style="left:808.24px;top:257.32px;width:61.32px;height:20.00px;font-size:8.45px;transform:scaleX(0.947);transform-origin:right 50%;white-space:nowrap;text-align:right;font-weight:bold;color:#dc3434;line-height:20px">7 000</div>
<div class="a" style="left:873.06px;top:257.32px;width:61.32px;height:20.00px;font-size:8.45px;transform:scaleX(0.947);transform-origin:right 50%;white-space:nowrap;text-align:right;font-weight:bold;color:#dc3434;line-height:20px">7 000</div>
<div class="a" style="left:937.88px;top:257.32px;width:61.32px;height:20.00px;font-size:8.45px;transform:scaleX(0.947);transform-origin:right 50%;white-space:nowrap;text-align:right;font-weight:bold;color:#dc3434;line-height:20px">7 000</div>
<div class="a" style="left:1002.70px;top:257.32px;width:61.32px;height:20.00px;font-size:8.45px;transform:scaleX(0.947);transform-origin:right 50%;white-space:nowrap;text-align:right;font-weight:bold;color:#dc3434;line-height:20px">7 000</div>
<div class="a" style="left:1067.52px;top:257.32px;width:61.32px;height:20.00px;font-size:8.45px;transform:scaleX(0.947);transform-origin:right 50%;white-space:nowrap;text-align:right;font-weight:bold;color:#dc3434;line-height:20px">7 000</div>
<div class="a" style="left:1132.34px;top:257.32px;width:61.32px;height:20.00px;font-size:8.45px;transform:scaleX(0.947);transform-origin:right 50%;white-space:nowrap;text-align:right;font-weight:bold;color:#2a2a2a;line-height:20px">83 000</div>
<div class="a" style="left:6px;top:277px;width:276px;height:21px;background:#e4eaf3"></div>
<div class="a" style="left:8px;top:277px;width:274px;height:1px;background:#d3dae4"></div>
<div class="a" style="left:6px;top:277px;width:2px;height:21px;background:#dde2e9"></div>
<div class="a" style="left:281px;top:277px;width:1px;height:21px;background:#d9dfe8"></div>
<div class="a" style="left:26.00px;top:277.57px;width:250.00px;height:20.00px;color:#3e3e3e;font-size:8.45px;transform:scaleX(0.947);transform-origin:left 50%;white-space:nowrap;line-height:20px">kontrakty i faktury (podstawa)</div>
<div class="a" style="left:285px;top:277px;width:66px;height:21px;background:#fcfcfd"></div>
<div class="a" style="left:285px;top:277px;width:66px;height:1px;background:rgba(0,0,0,0.095)"></div>
<div class="a" style="left:285px;top:277px;width:1px;height:21px;background:rgba(0,0,0,0.095)"></div>
<div class="a" style="left:350px;top:277px;width:1px;height:21px;background:rgba(0,0,0,0.095)"></div>
<div class="a" style="left:285.00px;top:277.57px;width:61.50px;height:20.00px;font-size:8.45px;transform:scaleX(0.947);transform-origin:right 50%;white-space:nowrap;text-align:right;color:#3e3e3e;line-height:20px">6 500</div>
<div class="a" style="left:355px;top:277px;width:777px;height:21px;background:#fefdc8"></div>
<div class="a" style="left:1132px;top:277px;width:66px;height:21px;background:#eef4fc"></div>
<div class="a" style="left:355px;top:277px;width:843px;height:1px;background:rgba(0,0,0,0.095)"></div>
<div class="a" style="left:355px;top:277px;width:1px;height:21px;background:rgba(0,0,0,0.095)"></div>
<div class="a" style="left:419px;top:277px;width:1px;height:21px;background:rgba(0,0,0,0.095)"></div>
<div class="a" style="left:484px;top:277px;width:1px;height:21px;background:rgba(0,0,0,0.095)"></div>
<div class="a" style="left:549px;top:277px;width:1px;height:21px;background:rgba(0,0,0,0.095)"></div>
<div class="a" style="left:614px;top:277px;width:1px;height:21px;background:rgba(0,0,0,0.095)"></div>
<div class="a" style="left:679px;top:277px;width:1px;height:21px;background:rgba(0,0,0,0.095)"></div>
<div class="a" style="left:743px;top:277px;width:1px;height:21px;background:rgba(0,0,0,0.095)"></div>
<div class="a" style="left:808px;top:277px;width:1px;height:21px;background:rgba(0,0,0,0.095)"></div>
<div class="a" style="left:873px;top:277px;width:1px;height:21px;background:rgba(0,0,0,0.095)"></div>
<div class="a" style="left:938px;top:277px;width:1px;height:21px;background:rgba(0,0,0,0.095)"></div>
<div class="a" style="left:1003px;top:277px;width:1px;height:21px;background:rgba(0,0,0,0.095)"></div>
<div class="a" style="left:1068px;top:277px;width:1px;height:21px;background:rgba(0,0,0,0.095)"></div>
<div class="a" style="left:1132px;top:277px;width:1px;height:21px;background:rgba(0,0,0,0.095)"></div>
<div class="a" style="left:1197px;top:277px;width:1px;height:21px;background:rgba(0,0,0,0.095)"></div>
<div class="a" style="left:354.50px;top:277.57px;width:61.32px;height:20.00px;font-size:8.45px;transform:scaleX(0.947);transform-origin:right 50%;white-space:nowrap;text-align:right;color:#3e3e3e;line-height:20px">6 500</div>
<div class="a" style="left:419.32px;top:277.57px;width:61.32px;height:20.00px;font-size:8.45px;transform:scaleX(0.947);transform-origin:right 50%;white-space:nowrap;text-align:right;color:#3e3e3e;line-height:20px">6 500</div>
<div class="a" style="left:484.14px;top:277.57px;width:61.32px;height:20.00px;font-size:8.45px;transform:scaleX(0.947);transform-origin:right 50%;white-space:nowrap;text-align:right;color:#e2452f;line-height:20px">7 000</div>
<div class="a" style="left:548.96px;top:277.57px;width:61.32px;height:20.00px;font-size:8.45px;transform:scaleX(0.947);transform-origin:right 50%;white-space:nowrap;text-align:right;color:#e2452f;line-height:20px">7 000</div>
<div class="a" style="left:613.78px;top:277.57px;width:61.32px;height:20.00px;font-size:8.45px;transform:scaleX(0.947);transform-origin:right 50%;white-space:nowrap;text-align:right;color:#e2452f;line-height:20px">7 000</div>
<div class="a" style="left:678.60px;top:277.57px;width:61.32px;height:20.00px;font-size:8.45px;transform:scaleX(0.947);transform-origin:right 50%;white-space:nowrap;text-align:right;color:#e2452f;line-height:20px">7 000</div>
<div class="a" style="left:743.42px;top:277.57px;width:61.32px;height:20.00px;font-size:8.45px;transform:scaleX(0.947);transform-origin:right 50%;white-space:nowrap;text-align:right;color:#e2452f;line-height:20px">7 000</div>
<div class="a" style="left:808.24px;top:277.57px;width:61.32px;height:20.00px;font-size:8.45px;transform:scaleX(0.947);transform-origin:right 50%;white-space:nowrap;text-align:right;color:#e2452f;line-height:20px">7 000</div>
<div class="a" style="left:873.06px;top:277.57px;width:61.32px;height:20.00px;font-size:8.45px;transform:scaleX(0.947);transform-origin:right 50%;white-space:nowrap;text-align:right;color:#e2452f;line-height:20px">7 000</div>
<div class="a" style="left:937.88px;top:277.57px;width:61.32px;height:20.00px;font-size:8.45px;transform:scaleX(0.947);transform-origin:right 50%;white-space:nowrap;text-align:right;color:#e2452f;line-height:20px">7 000</div>
<div class="a" style="left:1002.70px;top:277.57px;width:61.32px;height:20.00px;font-size:8.45px;transform:scaleX(0.947);transform-origin:right 50%;white-space:nowrap;text-align:right;color:#e2452f;line-height:20px">7 000</div>
<div class="a" style="left:1067.52px;top:277.57px;width:61.32px;height:20.00px;font-size:8.45px;transform:scaleX(0.947);transform-origin:right 50%;white-space:nowrap;text-align:right;color:#e2452f;line-height:20px">7 000</div>
<div class="a" style="left:1132.34px;top:277.57px;width:61.32px;height:20.00px;font-size:8.45px;transform:scaleX(0.947);transform-origin:right 50%;white-space:nowrap;text-align:right;font-weight:bold;color:#2a2a2a;line-height:20px">83 000</div>
<div class="a" style="left:6px;top:298px;width:276px;height:20px;background:#e4eaf3"></div>
<div class="a" style="left:8px;top:298px;width:274px;height:1px;background:#d3dae4"></div>
<div class="a" style="left:6px;top:298px;width:2px;height:20px;background:#dde2e9"></div>
<div class="a" style="left:281px;top:298px;width:1px;height:20px;background:#d9dfe8"></div>
<div class="a" style="left:26.00px;top:297.82px;width:250.00px;height:20.00px;color:#3e3e3e;font-size:8.45px;transform:scaleX(0.947);transform-origin:left 50%;white-space:nowrap;line-height:20px">kontrakty i faktury (dodatki)</div>
<div class="a" style="left:285px;top:298px;width:66px;height:20px;background:#fcfcfd"></div>
<div class="a" style="left:285px;top:298px;width:66px;height:1px;background:rgba(0,0,0,0.095)"></div>
<div class="a" style="left:285px;top:298px;width:1px;height:20px;background:rgba(0,0,0,0.095)"></div>
<div class="a" style="left:350px;top:298px;width:1px;height:20px;background:rgba(0,0,0,0.095)"></div>
<div class="a" style="left:355px;top:298px;width:777px;height:20px;background:#fefdc8"></div>
<div class="a" style="left:1132px;top:298px;width:66px;height:20px;background:#eef4fc"></div>
<div class="a" style="left:355px;top:298px;width:843px;height:1px;background:rgba(0,0,0,0.095)"></div>
<div class="a" style="left:355px;top:298px;width:1px;height:20px;background:rgba(0,0,0,0.095)"></div>
<div class="a" style="left:419px;top:298px;width:1px;height:20px;background:rgba(0,0,0,0.095)"></div>
<div class="a" style="left:484px;top:298px;width:1px;height:20px;background:rgba(0,0,0,0.095)"></div>
<div class="a" style="left:549px;top:298px;width:1px;height:20px;background:rgba(0,0,0,0.095)"></div>
<div class="a" style="left:614px;top:298px;width:1px;height:20px;background:rgba(0,0,0,0.095)"></div>
<div class="a" style="left:679px;top:298px;width:1px;height:20px;background:rgba(0,0,0,0.095)"></div>
<div class="a" style="left:743px;top:298px;width:1px;height:20px;background:rgba(0,0,0,0.095)"></div>
<div class="a" style="left:808px;top:298px;width:1px;height:20px;background:rgba(0,0,0,0.095)"></div>
<div class="a" style="left:873px;top:298px;width:1px;height:20px;background:rgba(0,0,0,0.095)"></div>
<div class="a" style="left:938px;top:298px;width:1px;height:20px;background:rgba(0,0,0,0.095)"></div>
<div class="a" style="left:1003px;top:298px;width:1px;height:20px;background:rgba(0,0,0,0.095)"></div>
<div class="a" style="left:1068px;top:298px;width:1px;height:20px;background:rgba(0,0,0,0.095)"></div>
<div class="a" style="left:1132px;top:298px;width:1px;height:20px;background:rgba(0,0,0,0.095)"></div>
<div class="a" style="left:1197px;top:298px;width:1px;height:20px;background:rgba(0,0,0,0.095)"></div>
<div class="a" style="left:6px;top:318px;width:276px;height:20px;background:#e4eaf3"></div>
<div class="a" style="left:8px;top:318px;width:274px;height:1px;background:#d3dae4"></div>
<div class="a" style="left:6px;top:318px;width:2px;height:20px;background:#dde2e9"></div>
<div class="a" style="left:281px;top:318px;width:1px;height:20px;background:#d9dfe8"></div>
<div class="a" style="left:26.00px;top:318.07px;width:250.00px;height:20.00px;color:#3e3e3e;font-size:8.45px;transform:scaleX(0.947);transform-origin:left 50%;white-space:nowrap;line-height:20px">kontrakty i faktury (nagrody uznaniowe)</div>
<div class="a" style="left:285px;top:318px;width:66px;height:20px;background:#fcfcfd"></div>
<div class="a" style="left:285px;top:318px;width:66px;height:1px;background:rgba(0,0,0,0.095)"></div>
<div class="a" style="left:285px;top:318px;width:1px;height:20px;background:rgba(0,0,0,0.095)"></div>
<div class="a" style="left:350px;top:318px;width:1px;height:20px;background:rgba(0,0,0,0.095)"></div>
<div class="a" style="left:355px;top:318px;width:777px;height:20px;background:#fefdc8"></div>
<div class="a" style="left:1132px;top:318px;width:66px;height:20px;background:#eef4fc"></div>
<div class="a" style="left:355px;top:318px;width:843px;height:1px;background:rgba(0,0,0,0.095)"></div>
<div class="a" style="left:355px;top:318px;width:1px;height:20px;background:rgba(0,0,0,0.095)"></div>
<div class="a" style="left:419px;top:318px;width:1px;height:20px;background:rgba(0,0,0,0.095)"></div>
<div class="a" style="left:484px;top:318px;width:1px;height:20px;background:rgba(0,0,0,0.095)"></div>
<div class="a" style="left:549px;top:318px;width:1px;height:20px;background:rgba(0,0,0,0.095)"></div>
<div class="a" style="left:614px;top:318px;width:1px;height:20px;background:rgba(0,0,0,0.095)"></div>
<div class="a" style="left:679px;top:318px;width:1px;height:20px;background:rgba(0,0,0,0.095)"></div>
<div class="a" style="left:743px;top:318px;width:1px;height:20px;background:rgba(0,0,0,0.095)"></div>
<div class="a" style="left:808px;top:318px;width:1px;height:20px;background:rgba(0,0,0,0.095)"></div>
<div class="a" style="left:873px;top:318px;width:1px;height:20px;background:rgba(0,0,0,0.095)"></div>
<div class="a" style="left:938px;top:318px;width:1px;height:20px;background:rgba(0,0,0,0.095)"></div>
<div class="a" style="left:1003px;top:318px;width:1px;height:20px;background:rgba(0,0,0,0.095)"></div>
<div class="a" style="left:1068px;top:318px;width:1px;height:20px;background:rgba(0,0,0,0.095)"></div>
<div class="a" style="left:1132px;top:318px;width:1px;height:20px;background:rgba(0,0,0,0.095)"></div>
<div class="a" style="left:1197px;top:318px;width:1px;height:20px;background:rgba(0,0,0,0.095)"></div>
<div class="a" style="left:7px;top:345px;width:274px;height:19px;background:#3d65a0"></div>
<div class="a" style="left:7px;top:345px;width:274px;height:1px;background:#39598a"></div>
<div class="a" style="left:19.50px;top:344.19px;width:260.00px;height:20.00px;font-weight:bold;color:#fff;font-size:8.45px;transform:scaleX(0.947);transform-origin:left 50%;white-space:nowrap;line-height:20px">UMOWA O PRACĘ / EMPLOYMENT CONTRACT</div>
<div class="a" style="left:285px;top:344px;width:66px;height:1px;background:rgba(0,0,0,0.095)"></div>
<div class="a" style="left:355px;top:344px;width:843px;height:1px;background:rgba(0,0,0,0.095)"></div>
<div class="a" style="left:6px;top:364px;width:276px;height:20px;background:#e4eaf3"></div>
<div class="a" style="left:8px;top:364px;width:274px;height:1px;background:#d3dae4"></div>
<div class="a" style="left:6px;top:364px;width:2px;height:20px;background:#dde2e9"></div>
<div class="a" style="left:281px;top:364px;width:1px;height:20px;background:#d9dfe8"></div>
<svg class="a" style="left:9px;top:371px" width="8" height="8" viewBox="0 0 8 8"><rect x="0" y="0" width="8" height="8" rx="1.5" fill="#2b5687"/><rect x="1.5" y="3" width="5" height="2" fill="#fff"/></svg>
<div class="a" style="left:19.50px;top:364.32px;width:250.00px;height:20.00px;font-weight:bold;color:#2a2a2a;font-size:8.45px;transform:scaleX(0.947);transform-origin:left 50%;white-space:nowrap;line-height:20px">0168 Jan Polak</div>
<div class="a" style="left:285px;top:364px;width:66px;height:20px;background:#eef4fc"></div>
<div class="a" style="left:285px;top:364px;width:66px;height:1px;background:rgba(0,0,0,0.095)"></div>
<div class="a" style="left:285px;top:364px;width:1px;height:20px;background:rgba(0,0,0,0.095)"></div>
<div class="a" style="left:350px;top:364px;width:1px;height:20px;background:rgba(0,0,0,0.095)"></div>
<div class="a" style="left:285.00px;top:364.32px;width:61.50px;height:20.00px;font-size:8.45px;transform:scaleX(0.947);transform-origin:right 50%;white-space:nowrap;text-align:right;font-weight:bold;color:#2a2a2a;line-height:20px">6 500</div>
<div class="a" style="left:355px;top:364px;width:777px;height:20px;background:#eef4fc"></div>
<div class="a" style="left:1132px;top:364px;width:66px;height:20px;background:#eef4fc"></div>
<div class="a" style="left:355px;top:364px;width:843px;height:1px;background:rgba(0,0,0,0.095)"></div>
<div class="a" style="left:355px;top:364px;width:1px;height:20px;background:rgba(0,0,0,0.095)"></div>
<div class="a" style="left:419px;top:364px;width:1px;height:20px;background:rgba(0,0,0,0.095)"></div>
<div class="a" style="left:484px;top:364px;width:1px;height:20px;background:rgba(0,0,0,0.095)"></div>
<div class="a" style="left:549px;top:364px;width:1px;height:20px;background:rgba(0,0,0,0.095)"></div>
<div class="a" style="left:614px;top:364px;width:1px;height:20px;background:rgba(0,0,0,0.095)"></div>
<div class="a" style="left:679px;top:364px;width:1px;height:20px;background:rgba(0,0,0,0.095)"></div>
<div class="a" style="left:743px;top:364px;width:1px;height:20px;background:rgba(0,0,0,0.095)"></div>
<div class="a" style="left:808px;top:364px;width:1px;height:20px;background:rgba(0,0,0,0.095)"></div>
<div class="a" style="left:873px;top:364px;width:1px;height:20px;background:rgba(0,0,0,0.095)"></div>
<div class="a" style="left:938px;top:364px;width:1px;height:20px;background:rgba(0,0,0,0.095)"></div>
<div class="a" style="left:1003px;top:364px;width:1px;height:20px;background:rgba(0,0,0,0.095)"></div>
<div class="a" style="left:1068px;top:364px;width:1px;height:20px;background:rgba(0,0,0,0.095)"></div>
<div class="a" style="left:1132px;top:364px;width:1px;height:20px;background:rgba(0,0,0,0.095)"></div>
<div class="a" style="left:1197px;top:364px;width:1px;height:20px;background:rgba(0,0,0,0.095)"></div>
<div class="a" style="left:354.50px;top:364.32px;width:61.32px;height:20.00px;font-size:8.45px;transform:scaleX(0.947);transform-origin:right 50%;white-space:nowrap;text-align:right;font-weight:bold;color:#2a2a2a;line-height:20px">7 885</div>
<div class="a" style="left:419.32px;top:364.32px;width:61.32px;height:20.00px;font-size:8.45px;transform:scaleX(0.947);transform-origin:right 50%;white-space:nowrap;text-align:right;font-weight:bold;color:#2a2a2a;line-height:20px">7 885</div>
<div class="a" style="left:484.14px;top:364.32px;width:61.32px;height:20.00px;font-size:8.45px;transform:scaleX(0.947);transform-origin:right 50%;white-space:nowrap;text-align:right;font-weight:bold;color:#dc3434;line-height:20px">13 186</div>
<div class="a" style="left:548.96px;top:364.32px;width:61.32px;height:20.00px;font-size:8.45px;transform:scaleX(0.947);transform-origin:right 50%;white-space:nowrap;text-align:right;font-weight:bold;color:#dc3434;line-height:20px">10 311</div>
<div class="a" style="left:613.78px;top:364.32px;width:61.32px;height:20.00px;font-size:8.45px;transform:scaleX(0.947);transform-origin:right 50%;white-space:nowrap;text-align:right;font-weight:bold;color:#dc3434;line-height:20px">10 311</div>
<div class="a" style="left:678.60px;top:364.32px;width:61.32px;height:20.00px;font-size:8.45px;transform:scaleX(0.947);transform-origin:right 50%;white-space:nowrap;text-align:right;font-weight:bold;color:#dc3434;line-height:20px">13 186</div>
<div class="a" style="left:743.42px;top:364.32px;width:61.32px;height:20.00px;font-size:8.45px;transform:scaleX(0.947);transform-origin:right 50%;white-space:nowrap;text-align:right;font-weight:bold;color:#dc3434;line-height:20px">10 311</div>
<div class="a" style="left:808.24px;top:364.32px;width:61.32px;height:20.00px;font-size:8.45px;transform:scaleX(0.947);transform-origin:right 50%;white-space:nowrap;text-align:right;font-weight:bold;color:#dc3434;line-height:20px">10 311</div>
<div class="a" style="left:873.06px;top:364.32px;width:61.32px;height:20.00px;font-size:8.45px;transform:scaleX(0.947);transform-origin:right 50%;white-space:nowrap;text-align:right;font-weight:bold;color:#dc3434;line-height:20px">13 186</div>
<div class="a" style="left:937.88px;top:364.32px;width:61.32px;height:20.00px;font-size:8.45px;transform:scaleX(0.947);transform-origin:right 50%;white-space:nowrap;text-align:right;font-weight:bold;color:#dc3434;line-height:20px">10 311</div>
<div class="a" style="left:1002.70px;top:364.32px;width:61.32px;height:20.00px;font-size:8.45px;transform:scaleX(0.947);transform-origin:right 50%;white-space:nowrap;text-align:right;font-weight:bold;color:#dc3434;line-height:20px">10 311</div>
<div class="a" style="left:1067.52px;top:364.32px;width:61.32px;height:20.00px;font-size:8.45px;transform:scaleX(0.947);transform-origin:right 50%;white-space:nowrap;text-align:right;font-weight:bold;color:#dc3434;line-height:20px">16 061</div>
<div class="a" style="left:1132.34px;top:364.32px;width:61.32px;height:20.00px;font-size:8.45px;transform:scaleX(0.947);transform-origin:right 50%;white-space:nowrap;text-align:right;font-weight:bold;color:#2a2a2a;line-height:20px">133 250</div>
<div class="a" style="left:6px;top:384px;width:276px;height:21px;background:#e4eaf3"></div>
<div class="a" style="left:8px;top:384px;width:274px;height:1px;background:#d3dae4"></div>
<div class="a" style="left:6px;top:384px;width:2px;height:21px;background:#dde2e9"></div>
<div class="a" style="left:281px;top:384px;width:1px;height:21px;background:#d9dfe8"></div>
<svg class="a" style="left:16px;top:391px" width="8" height="8" viewBox="0 0 8 8"><rect x="0" y="0" width="8" height="8" rx="1.5" fill="#2b5687"/><rect x="1.5" y="3" width="5" height="2" fill="#fff"/></svg>
<div class="a" style="left:26.00px;top:384.57px;width:250.00px;height:20.00px;font-weight:bold;color:#2a2a2a;font-size:8.45px;transform:scaleX(0.947);transform-origin:left 50%;white-space:nowrap;line-height:20px">umowy o pracę razem</div>
<div class="a" style="left:285px;top:384px;width:66px;height:21px;background:#eef4fc"></div>
<div class="a" style="left:285px;top:384px;width:66px;height:1px;background:rgba(0,0,0,0.095)"></div>
<div class="a" style="left:285px;top:384px;width:1px;height:21px;background:rgba(0,0,0,0.095)"></div>
<div class="a" style="left:350px;top:384px;width:1px;height:21px;background:rgba(0,0,0,0.095)"></div>
<div class="a" style="left:285.00px;top:384.57px;width:61.50px;height:20.00px;font-size:8.45px;transform:scaleX(0.947);transform-origin:right 50%;white-space:nowrap;text-align:right;font-weight:bold;color:#2a2a2a;line-height:20px">6 500</div>
<div class="a" style="left:355px;top:384px;width:777px;height:21px;background:#eef4fc"></div>
<div class="a" style="left:1132px;top:384px;width:66px;height:21px;background:#eef4fc"></div>
<div class="a" style="left:355px;top:384px;width:843px;height:1px;background:rgba(0,0,0,0.095)"></div>
<div class="a" style="left:355px;top:384px;width:1px;height:21px;background:rgba(0,0,0,0.095)"></div>
<div class="a" style="left:419px;top:384px;width:1px;height:21px;background:rgba(0,0,0,0.095)"></div>
<div class="a" style="left:484px;top:384px;width:1px;height:21px;background:rgba(0,0,0,0.095)"></div>
<div class="a" style="left:549px;top:384px;width:1px;height:21px;background:rgba(0,0,0,0.095)"></div>
<div class="a" style="left:614px;top:384px;width:1px;height:21px;background:rgba(0,0,0,0.095)"></div>
<div class="a" style="left:679px;top:384px;width:1px;height:21px;background:rgba(0,0,0,0.095)"></div>
<div class="a" style="left:743px;top:384px;width:1px;height:21px;background:rgba(0,0,0,0.095)"></div>
<div class="a" style="left:808px;top:384px;width:1px;height:21px;background:rgba(0,0,0,0.095)"></div>
<div class="a" style="left:873px;top:384px;width:1px;height:21px;background:rgba(0,0,0,0.095)"></div>
<div class="a" style="left:938px;top:384px;width:1px;height:21px;background:rgba(0,0,0,0.095)"></div>
<div class="a" style="left:1003px;top:384px;width:1px;height:21px;background:rgba(0,0,0,0.095)"></div>
<div class="a" style="left:1068px;top:384px;width:1px;height:21px;background:rgba(0,0,0,0.095)"></div>
<div class="a" style="left:1132px;top:384px;width:1px;height:21px;background:rgba(0,0,0,0.095)"></div>
<div class="a" style="left:1197px;top:384px;width:1px;height:21px;background:rgba(0,0,0,0.095)"></div>
<div class="a" style="left:354.50px;top:384.57px;width:61.32px;height:20.00px;font-size:8.45px;transform:scaleX(0.947);transform-origin:right 50%;white-space:nowrap;text-align:right;font-weight:bold;color:#2a2a2a;line-height:20px">7 885</div>
<div class="a" style="left:419.32px;top:384.57px;width:61.32px;height:20.00px;font-size:8.45px;transform:scaleX(0.947);transform-origin:right 50%;white-space:nowrap;text-align:right;font-weight:bold;color:#2a2a2a;line-height:20px">7 885</div>
<div class="a" style="left:484.14px;top:384.57px;width:61.32px;height:20.00px;font-size:8.45px;transform:scaleX(0.947);transform-origin:right 50%;white-space:nowrap;text-align:right;font-weight:bold;color:#dc3434;line-height:20px">10 311</div>
<div class="a" style="left:548.96px;top:384.57px;width:61.32px;height:20.00px;font-size:8.45px;transform:scaleX(0.947);transform-origin:right 50%;white-space:nowrap;text-align:right;font-weight:bold;color:#dc3434;line-height:20px">10 311</div>
<div class="a" style="left:613.78px;top:384.57px;width:61.32px;height:20.00px;font-size:8.45px;transform:scaleX(0.947);transform-origin:right 50%;white-space:nowrap;text-align:right;font-weight:bold;color:#dc3434;line-height:20px">10 311</div>
<div class="a" style="left:678.60px;top:384.57px;width:61.32px;height:20.00px;font-size:8.45px;transform:scaleX(0.947);transform-origin:right 50%;white-space:nowrap;text-align:right;font-weight:bold;color:#dc3434;line-height:20px">10 311</div>
<div class="a" style="left:743.42px;top:384.57px;width:61.32px;height:20.00px;font-size:8.45px;transform:scaleX(0.947);transform-origin:right 50%;white-space:nowrap;text-align:right;font-weight:bold;color:#dc3434;line-height:20px">10 311</div>
<div class="a" style="left:808.24px;top:384.57px;width:61.32px;height:20.00px;font-size:8.45px;transform:scaleX(0.947);transform-origin:right 50%;white-space:nowrap;text-align:right;font-weight:bold;color:#dc3434;line-height:20px">10 311</div>
<div class="a" style="left:873.06px;top:384.57px;width:61.32px;height:20.00px;font-size:8.45px;transform:scaleX(0.947);transform-origin:right 50%;white-space:nowrap;text-align:right;font-weight:bold;color:#dc3434;line-height:20px">10 311</div>
<div class="a" style="left:937.88px;top:384.57px;width:61.32px;height:20.00px;font-size:8.45px;transform:scaleX(0.947);transform-origin:right 50%;white-space:nowrap;text-align:right;font-weight:bold;color:#dc3434;line-height:20px">10 311</div>
<div class="a" style="left:1002.70px;top:384.57px;width:61.32px;height:20.00px;font-size:8.45px;transform:scaleX(0.947);transform-origin:right 50%;white-space:nowrap;text-align:right;font-weight:bold;color:#dc3434;line-height:20px">10 311</div>
<div class="a" style="left:1067.52px;top:384.57px;width:61.32px;height:20.00px;font-size:8.45px;transform:scaleX(0.947);transform-origin:right 50%;white-space:nowrap;text-align:right;font-weight:bold;color:#dc3434;line-height:20px">10 311</div>
<div class="a" style="left:1132.34px;top:384.57px;width:61.32px;height:20.00px;font-size:8.45px;transform:scaleX(0.947);transform-origin:right 50%;white-space:nowrap;text-align:right;font-weight:bold;color:#2a2a2a;line-height:20px">118 874</div>
<div class="a" style="left:6px;top:405px;width:276px;height:20px;background:#e4eaf3"></div>
<div class="a" style="left:8px;top:405px;width:274px;height:1px;background:#d3dae4"></div>
<div class="a" style="left:6px;top:405px;width:2px;height:20px;background:#dde2e9"></div>
<div class="a" style="left:281px;top:405px;width:1px;height:20px;background:#d9dfe8"></div>
<div class="a" style="left:33.00px;top:404.82px;width:250.00px;height:20.00px;color:#3e3e3e;font-size:8.45px;transform:scaleX(0.947);transform-origin:left 50%;white-space:nowrap;line-height:20px">podstawa</div>
<div class="a" style="left:285px;top:405px;width:66px;height:20px;background:#fcfcfd"></div>
<div class="a" style="left:285px;top:405px;width:66px;height:1px;background:rgba(0,0,0,0.095)"></div>
<div class="a" style="left:285px;top:405px;width:1px;height:20px;background:rgba(0,0,0,0.095)"></div>
<div class="a" style="left:350px;top:405px;width:1px;height:20px;background:rgba(0,0,0,0.095)"></div>
<div class="a" style="left:285.00px;top:404.82px;width:61.50px;height:20.00px;font-size:8.45px;transform:scaleX(0.947);transform-origin:right 50%;white-space:nowrap;text-align:right;color:#3e3e3e;line-height:20px">6 500</div>
<div class="a" style="left:355px;top:405px;width:777px;height:20px;background:#fefdc8"></div>
<div class="a" style="left:1132px;top:405px;width:66px;height:20px;background:#eef4fc"></div>
<div class="a" style="left:355px;top:405px;width:843px;height:1px;background:rgba(0,0,0,0.095)"></div>
<div class="a" style="left:355px;top:405px;width:1px;height:20px;background:rgba(0,0,0,0.095)"></div>
<div class="a" style="left:419px;top:405px;width:1px;height:20px;background:rgba(0,0,0,0.095)"></div>
<div class="a" style="left:484px;top:405px;width:1px;height:20px;background:rgba(0,0,0,0.095)"></div>
<div class="a" style="left:549px;top:405px;width:1px;height:20px;background:rgba(0,0,0,0.095)"></div>
<div class="a" style="left:614px;top:405px;width:1px;height:20px;background:rgba(0,0,0,0.095)"></div>
<div class="a" style="left:679px;top:405px;width:1px;height:20px;background:rgba(0,0,0,0.095)"></div>
<div class="a" style="left:743px;top:405px;width:1px;height:20px;background:rgba(0,0,0,0.095)"></div>
<div class="a" style="left:808px;top:405px;width:1px;height:20px;background:rgba(0,0,0,0.095)"></div>
<div class="a" style="left:873px;top:405px;width:1px;height:20px;background:rgba(0,0,0,0.095)"></div>
<div class="a" style="left:938px;top:405px;width:1px;height:20px;background:rgba(0,0,0,0.095)"></div>
<div class="a" style="left:1003px;top:405px;width:1px;height:20px;background:rgba(0,0,0,0.095)"></div>
<div class="a" style="left:1068px;top:405px;width:1px;height:20px;background:rgba(0,0,0,0.095)"></div>
<div class="a" style="left:1132px;top:405px;width:1px;height:20px;background:rgba(0,0,0,0.095)"></div>
<div class="a" style="left:1197px;top:405px;width:1px;height:20px;background:rgba(0,0,0,0.095)"></div>
<div class="a" style="left:354.50px;top:404.82px;width:61.32px;height:20.00px;font-size:8.45px;transform:scaleX(0.947);transform-origin:right 50%;white-space:nowrap;text-align:right;color:#3e3e3e;line-height:20px">6 500</div>
<div class="a" style="left:419.32px;top:404.82px;width:61.32px;height:20.00px;font-size:8.45px;transform:scaleX(0.947);transform-origin:right 50%;white-space:nowrap;text-align:right;color:#3e3e3e;line-height:20px">6 500</div>
<div class="a" style="left:484.14px;top:404.82px;width:61.32px;height:20.00px;font-size:8.45px;transform:scaleX(0.947);transform-origin:right 50%;white-space:nowrap;text-align:right;color:#e2452f;line-height:20px">8 500</div>
<div class="a" style="left:548.96px;top:404.82px;width:61.32px;height:20.00px;font-size:8.45px;transform:scaleX(0.947);transform-origin:right 50%;white-space:nowrap;text-align:right;color:#e2452f;line-height:20px">8 500</div>
<div class="a" style="left:613.78px;top:404.82px;width:61.32px;height:20.00px;font-size:8.45px;transform:scaleX(0.947);transform-origin:right 50%;white-space:nowrap;text-align:right;color:#e2452f;line-height:20px">8 500</div>
<div class="a" style="left:678.60px;top:404.82px;width:61.32px;height:20.00px;font-size:8.45px;transform:scaleX(0.947);transform-origin:right 50%;white-space:nowrap;text-align:right;color:#e2452f;line-height:20px">8 500</div>
<div class="a" style="left:743.42px;top:404.82px;width:61.32px;height:20.00px;font-size:8.45px;transform:scaleX(0.947);transform-origin:right 50%;white-space:nowrap;text-align:right;color:#e2452f;line-height:20px">8 500</div>
<div class="a" style="left:808.24px;top:404.82px;width:61.32px;height:20.00px;font-size:8.45px;transform:scaleX(0.947);transform-origin:right 50%;white-space:nowrap;text-align:right;color:#e2452f;line-height:20px">8 500</div>
<div class="a" style="left:873.06px;top:404.82px;width:61.32px;height:20.00px;font-size:8.45px;transform:scaleX(0.947);transform-origin:right 50%;white-space:nowrap;text-align:right;color:#e2452f;line-height:20px">8 500</div>
<div class="a" style="left:937.88px;top:404.82px;width:61.32px;height:20.00px;font-size:8.45px;transform:scaleX(0.947);transform-origin:right 50%;white-space:nowrap;text-align:right;color:#e2452f;line-height:20px">8 500</div>
<div class="a" style="left:1002.70px;top:404.82px;width:61.32px;height:20.00px;font-size:8.45px;transform:scaleX(0.947);transform-origin:right 50%;white-space:nowrap;text-align:right;color:#e2452f;line-height:20px">8 500</div>
<div class="a" style="left:1067.52px;top:404.82px;width:61.32px;height:20.00px;font-size:8.45px;transform:scaleX(0.947);transform-origin:right 50%;white-space:nowrap;text-align:right;color:#e2452f;line-height:20px">8 500</div>
<div class="a" style="left:1132.34px;top:404.82px;width:61.32px;height:20.00px;font-size:8.45px;transform:scaleX(0.947);transform-origin:right 50%;white-space:nowrap;text-align:right;font-weight:bold;color:#2a2a2a;line-height:20px">98 000</div>
<div class="a" style="left:6px;top:425px;width:276px;height:20px;background:#e4eaf3"></div>
<div class="a" style="left:8px;top:425px;width:274px;height:1px;background:#d3dae4"></div>
<div class="a" style="left:6px;top:425px;width:2px;height:20px;background:#dde2e9"></div>
<div class="a" style="left:281px;top:425px;width:1px;height:20px;background:#d9dfe8"></div>
<div class="a" style="left:33.00px;top:425.07px;width:250.00px;height:20.00px;color:#3e3e3e;font-size:8.45px;transform:scaleX(0.947);transform-origin:left 50%;white-space:nowrap;line-height:20px">koszt pracodawcy</div>
<div class="a" style="left:285px;top:425px;width:66px;height:20px;background:#fcfcfd"></div>
<div class="a" style="left:285px;top:425px;width:66px;height:1px;background:rgba(0,0,0,0.095)"></div>
<div class="a" style="left:285px;top:425px;width:1px;height:20px;background:rgba(0,0,0,0.095)"></div>
<div class="a" style="left:350px;top:425px;width:1px;height:20px;background:rgba(0,0,0,0.095)"></div>
<div class="a" style="left:355px;top:425px;width:777px;height:20px;background:#fefdc8"></div>
<div class="a" style="left:1132px;top:425px;width:66px;height:20px;background:#eef4fc"></div>
<div class="a" style="left:355px;top:425px;width:843px;height:1px;background:rgba(0,0,0,0.095)"></div>
<div class="a" style="left:355px;top:425px;width:1px;height:20px;background:rgba(0,0,0,0.095)"></div>
<div class="a" style="left:419px;top:425px;width:1px;height:20px;background:rgba(0,0,0,0.095)"></div>
<div class="a" style="left:484px;top:425px;width:1px;height:20px;background:rgba(0,0,0,0.095)"></div>
<div class="a" style="left:549px;top:425px;width:1px;height:20px;background:rgba(0,0,0,0.095)"></div>
<div class="a" style="left:614px;top:425px;width:1px;height:20px;background:rgba(0,0,0,0.095)"></div>
<div class="a" style="left:679px;top:425px;width:1px;height:20px;background:rgba(0,0,0,0.095)"></div>
<div class="a" style="left:743px;top:425px;width:1px;height:20px;background:rgba(0,0,0,0.095)"></div>
<div class="a" style="left:808px;top:425px;width:1px;height:20px;background:rgba(0,0,0,0.095)"></div>
<div class="a" style="left:873px;top:425px;width:1px;height:20px;background:rgba(0,0,0,0.095)"></div>
<div class="a" style="left:938px;top:425px;width:1px;height:20px;background:rgba(0,0,0,0.095)"></div>
<div class="a" style="left:1003px;top:425px;width:1px;height:20px;background:rgba(0,0,0,0.095)"></div>
<div class="a" style="left:1068px;top:425px;width:1px;height:20px;background:rgba(0,0,0,0.095)"></div>
<div class="a" style="left:1132px;top:425px;width:1px;height:20px;background:rgba(0,0,0,0.095)"></div>
<div class="a" style="left:1197px;top:425px;width:1px;height:20px;background:rgba(0,0,0,0.095)"></div>
<div class="a" style="left:354.50px;top:425.07px;width:61.32px;height:20.00px;font-size:8.45px;transform:scaleX(0.947);transform-origin:right 50%;white-space:nowrap;text-align:right;color:#3e3e3e;line-height:20px">1 287</div>
<div class="a" style="left:419.32px;top:425.07px;width:61.32px;height:20.00px;font-size:8.45px;transform:scaleX(0.947);transform-origin:right 50%;white-space:nowrap;text-align:right;color:#3e3e3e;line-height:20px">1 287</div>
<div class="a" style="left:484.14px;top:425.07px;width:61.32px;height:20.00px;font-size:8.45px;transform:scaleX(0.947);transform-origin:right 50%;white-space:nowrap;text-align:right;color:#3e3e3e;line-height:20px">1 683</div>
<div class="a" style="left:548.96px;top:425.07px;width:61.32px;height:20.00px;font-size:8.45px;transform:scaleX(0.947);transform-origin:right 50%;white-space:nowrap;text-align:right;color:#3e3e3e;line-height:20px">1 683</div>
<div class="a" style="left:613.78px;top:425.07px;width:61.32px;height:20.00px;font-size:8.45px;transform:scaleX(0.947);transform-origin:right 50%;white-space:nowrap;text-align:right;color:#3e3e3e;line-height:20px">1 683</div>
<div class="a" style="left:678.60px;top:425.07px;width:61.32px;height:20.00px;font-size:8.45px;transform:scaleX(0.947);transform-origin:right 50%;white-space:nowrap;text-align:right;color:#3e3e3e;line-height:20px">1 683</div>
<div class="a" style="left:743.42px;top:425.07px;width:61.32px;height:20.00px;font-size:8.45px;transform:scaleX(0.947);transform-origin:right 50%;white-space:nowrap;text-align:right;color:#3e3e3e;line-height:20px">1 683</div>
<div class="a" style="left:808.24px;top:425.07px;width:61.32px;height:20.00px;font-size:8.45px;transform:scaleX(0.947);transform-origin:right 50%;white-space:nowrap;text-align:right;color:#3e3e3e;line-height:20px">1 683</div>
<div class="a" style="left:873.06px;top:425.07px;width:61.32px;height:20.00px;font-size:8.45px;transform:scaleX(0.947);transform-origin:right 50%;white-space:nowrap;text-align:right;color:#3e3e3e;line-height:20px">1 683</div>
<div class="a" style="left:937.88px;top:425.07px;width:61.32px;height:20.00px;font-size:8.45px;transform:scaleX(0.947);transform-origin:right 50%;white-space:nowrap;text-align:right;color:#3e3e3e;line-height:20px">1 683</div>
<div class="a" style="left:1002.70px;top:425.07px;width:61.32px;height:20.00px;font-size:8.45px;transform:scaleX(0.947);transform-origin:right 50%;white-space:nowrap;text-align:right;color:#3e3e3e;line-height:20px">1 683</div>
<div class="a" style="left:1067.52px;top:425.07px;width:61.32px;height:20.00px;font-size:8.45px;transform:scaleX(0.947);transform-origin:right 50%;white-space:nowrap;text-align:right;color:#3e3e3e;line-height:20px">1 683</div>
<div class="a" style="left:1132.34px;top:425.07px;width:61.32px;height:20.00px;font-size:8.45px;transform:scaleX(0.947);transform-origin:right 50%;white-space:nowrap;text-align:right;font-weight:bold;color:#2a2a2a;line-height:20px">19 404</div>
<div class="a" style="left:6px;top:445px;width:276px;height:20px;background:#e4eaf3"></div>
<div class="a" style="left:8px;top:445px;width:274px;height:1px;background:#d3dae4"></div>
<div class="a" style="left:6px;top:445px;width:2px;height:20px;background:#dde2e9"></div>
<div class="a" style="left:281px;top:445px;width:1px;height:20px;background:#d9dfe8"></div>
<div class="a" style="left:33.00px;top:445.32px;width:250.00px;height:20.00px;color:#3e3e3e;font-size:8.45px;transform:scaleX(0.947);transform-origin:left 50%;white-space:nowrap;line-height:20px">koszt pracodawcy PPK</div>
<div class="a" style="left:285px;top:445px;width:66px;height:20px;background:#fcfcfd"></div>
<div class="a" style="left:285px;top:445px;width:66px;height:1px;background:rgba(0,0,0,0.095)"></div>
<div class="a" style="left:285px;top:445px;width:1px;height:20px;background:rgba(0,0,0,0.095)"></div>
<div class="a" style="left:350px;top:445px;width:1px;height:20px;background:rgba(0,0,0,0.095)"></div>
<div class="a" style="left:355px;top:445px;width:777px;height:20px;background:#fefdc8"></div>
<div class="a" style="left:1132px;top:445px;width:66px;height:20px;background:#eef4fc"></div>
<div class="a" style="left:355px;top:445px;width:843px;height:1px;background:rgba(0,0,0,0.095)"></div>
<div class="a" style="left:355px;top:445px;width:1px;height:20px;background:rgba(0,0,0,0.095)"></div>
<div class="a" style="left:419px;top:445px;width:1px;height:20px;background:rgba(0,0,0,0.095)"></div>
<div class="a" style="left:484px;top:445px;width:1px;height:20px;background:rgba(0,0,0,0.095)"></div>
<div class="a" style="left:549px;top:445px;width:1px;height:20px;background:rgba(0,0,0,0.095)"></div>
<div class="a" style="left:614px;top:445px;width:1px;height:20px;background:rgba(0,0,0,0.095)"></div>
<div class="a" style="left:679px;top:445px;width:1px;height:20px;background:rgba(0,0,0,0.095)"></div>
<div class="a" style="left:743px;top:445px;width:1px;height:20px;background:rgba(0,0,0,0.095)"></div>
<div class="a" style="left:808px;top:445px;width:1px;height:20px;background:rgba(0,0,0,0.095)"></div>
<div class="a" style="left:873px;top:445px;width:1px;height:20px;background:rgba(0,0,0,0.095)"></div>
<div class="a" style="left:938px;top:445px;width:1px;height:20px;background:rgba(0,0,0,0.095)"></div>
<div class="a" style="left:1003px;top:445px;width:1px;height:20px;background:rgba(0,0,0,0.095)"></div>
<div class="a" style="left:1068px;top:445px;width:1px;height:20px;background:rgba(0,0,0,0.095)"></div>
<div class="a" style="left:1132px;top:445px;width:1px;height:20px;background:rgba(0,0,0,0.095)"></div>
<div class="a" style="left:1197px;top:445px;width:1px;height:20px;background:rgba(0,0,0,0.095)"></div>
<div class="a" style="left:354.50px;top:445.32px;width:61.32px;height:20.00px;font-size:8.45px;transform:scaleX(0.947);transform-origin:right 50%;white-space:nowrap;text-align:right;color:#3e3e3e;line-height:20px">98</div>
<div class="a" style="left:419.32px;top:445.32px;width:61.32px;height:20.00px;font-size:8.45px;transform:scaleX(0.947);transform-origin:right 50%;white-space:nowrap;text-align:right;color:#3e3e3e;line-height:20px">98</div>
<div class="a" style="left:484.14px;top:445.32px;width:61.32px;height:20.00px;font-size:8.45px;transform:scaleX(0.947);transform-origin:right 50%;white-space:nowrap;text-align:right;color:#3e3e3e;line-height:20px">128</div>
<div class="a" style="left:548.96px;top:445.32px;width:61.32px;height:20.00px;font-size:8.45px;transform:scaleX(0.947);transform-origin:right 50%;white-space:nowrap;text-align:right;color:#3e3e3e;line-height:20px">128</div>
<div class="a" style="left:613.78px;top:445.32px;width:61.32px;height:20.00px;font-size:8.45px;transform:scaleX(0.947);transform-origin:right 50%;white-space:nowrap;text-align:right;color:#3e3e3e;line-height:20px">128</div>
<div class="a" style="left:678.60px;top:445.32px;width:61.32px;height:20.00px;font-size:8.45px;transform:scaleX(0.947);transform-origin:right 50%;white-space:nowrap;text-align:right;color:#3e3e3e;line-height:20px">128</div>
<div class="a" style="left:743.42px;top:445.32px;width:61.32px;height:20.00px;font-size:8.45px;transform:scaleX(0.947);transform-origin:right 50%;white-space:nowrap;text-align:right;color:#3e3e3e;line-height:20px">128</div>
<div class="a" style="left:808.24px;top:445.32px;width:61.32px;height:20.00px;font-size:8.45px;transform:scaleX(0.947);transform-origin:right 50%;white-space:nowrap;text-align:right;color:#3e3e3e;line-height:20px">128</div>
<div class="a" style="left:873.06px;top:445.32px;width:61.32px;height:20.00px;font-size:8.45px;transform:scaleX(0.947);transform-origin:right 50%;white-space:nowrap;text-align:right;color:#3e3e3e;line-height:20px">128</div>
<div class="a" style="left:937.88px;top:445.32px;width:61.32px;height:20.00px;font-size:8.45px;transform:scaleX(0.947);transform-origin:right 50%;white-space:nowrap;text-align:right;color:#3e3e3e;line-height:20px">128</div>
<div class="a" style="left:1002.70px;top:445.32px;width:61.32px;height:20.00px;font-size:8.45px;transform:scaleX(0.947);transform-origin:right 50%;white-space:nowrap;text-align:right;color:#3e3e3e;line-height:20px">128</div>
<div class="a" style="left:1067.52px;top:445.32px;width:61.32px;height:20.00px;font-size:8.45px;transform:scaleX(0.947);transform-origin:right 50%;white-space:nowrap;text-align:right;color:#3e3e3e;line-height:20px">128</div>
<div class="a" style="left:1132.34px;top:445.32px;width:61.32px;height:20.00px;font-size:8.45px;transform:scaleX(0.947);transform-origin:right 50%;white-space:nowrap;text-align:right;font-weight:bold;color:#2a2a2a;line-height:20px">1 470</div>
<div class="a" style="left:6px;top:465px;width:276px;height:21px;background:#e4eaf3"></div>
<div class="a" style="left:8px;top:465px;width:274px;height:1px;background:#d3dae4"></div>
<div class="a" style="left:6px;top:465px;width:2px;height:21px;background:#dde2e9"></div>
<div class="a" style="left:281px;top:465px;width:1px;height:21px;background:#d9dfe8"></div>
<svg class="a" style="left:16px;top:472px" width="8" height="8" viewBox="0 0 8 8"><rect x="0" y="0" width="8" height="8" rx="1.5" fill="#2b5687"/><rect x="1.5" y="3" width="5" height="2" fill="#fff"/></svg>
<div class="a" style="left:26.00px;top:465.57px;width:250.00px;height:20.00px;font-weight:bold;color:#2a2a2a;font-size:8.45px;transform:scaleX(0.947);transform-origin:left 50%;white-space:nowrap;line-height:20px">nagrody efektywnościowe razem</div>
<div class="a" style="left:285px;top:465px;width:66px;height:21px;background:#eef4fc"></div>
<div class="a" style="left:285px;top:465px;width:66px;height:1px;background:rgba(0,0,0,0.095)"></div>
<div class="a" style="left:285px;top:465px;width:1px;height:21px;background:rgba(0,0,0,0.095)"></div>
<div class="a" style="left:350px;top:465px;width:1px;height:21px;background:rgba(0,0,0,0.095)"></div>
<div class="a" style="left:355px;top:465px;width:777px;height:21px;background:#eef4fc"></div>
<div class="a" style="left:1132px;top:465px;width:66px;height:21px;background:#eef4fc"></div>
<div class="a" style="left:355px;top:465px;width:843px;height:1px;background:rgba(0,0,0,0.095)"></div>
<div class="a" style="left:355px;top:465px;width:1px;height:21px;background:rgba(0,0,0,0.095)"></div>
<div class="a" style="left:419px;top:465px;width:1px;height:21px;background:rgba(0,0,0,0.095)"></div>
<div class="a" style="left:484px;top:465px;width:1px;height:21px;background:rgba(0,0,0,0.095)"></div>
<div class="a" style="left:549px;top:465px;width:1px;height:21px;background:rgba(0,0,0,0.095)"></div>
<div class="a" style="left:614px;top:465px;width:1px;height:21px;background:rgba(0,0,0,0.095)"></div>
<div class="a" style="left:679px;top:465px;width:1px;height:21px;background:rgba(0,0,0,0.095)"></div>
<div class="a" style="left:743px;top:465px;width:1px;height:21px;background:rgba(0,0,0,0.095)"></div>
<div class="a" style="left:808px;top:465px;width:1px;height:21px;background:rgba(0,0,0,0.095)"></div>
<div class="a" style="left:873px;top:465px;width:1px;height:21px;background:rgba(0,0,0,0.095)"></div>
<div class="a" style="left:938px;top:465px;width:1px;height:21px;background:rgba(0,0,0,0.095)"></div>
<div class="a" style="left:1003px;top:465px;width:1px;height:21px;background:rgba(0,0,0,0.095)"></div>
<div class="a" style="left:1068px;top:465px;width:1px;height:21px;background:rgba(0,0,0,0.095)"></div>
<div class="a" style="left:1132px;top:465px;width:1px;height:21px;background:rgba(0,0,0,0.095)"></div>
<div class="a" style="left:1197px;top:465px;width:1px;height:21px;background:rgba(0,0,0,0.095)"></div>
<div class="a" style="left:6px;top:486px;width:276px;height:20px;background:#e4eaf3"></div>
<div class="a" style="left:8px;top:486px;width:274px;height:1px;background:#d3dae4"></div>
<div class="a" style="left:6px;top:486px;width:2px;height:20px;background:#dde2e9"></div>
<div class="a" style="left:281px;top:486px;width:1px;height:20px;background:#d9dfe8"></div>
<div class="a" style="left:33.00px;top:485.82px;width:250.00px;height:20.00px;color:#3e3e3e;font-size:8.45px;transform:scaleX(0.947);transform-origin:left 50%;white-space:nowrap;line-height:20px">podstawa</div>
<div class="a" style="left:285px;top:486px;width:66px;height:20px;background:#fcfcfd"></div>
<div class="a" style="left:285px;top:486px;width:66px;height:1px;background:rgba(0,0,0,0.095)"></div>
<div class="a" style="left:285px;top:486px;width:1px;height:20px;background:rgba(0,0,0,0.095)"></div>
<div class="a" style="left:350px;top:486px;width:1px;height:20px;background:rgba(0,0,0,0.095)"></div>
<div class="a" style="left:355px;top:486px;width:777px;height:20px;background:#fefdc8"></div>
<div class="a" style="left:1132px;top:486px;width:66px;height:20px;background:#eef4fc"></div>
<div class="a" style="left:355px;top:486px;width:843px;height:1px;background:rgba(0,0,0,0.095)"></div>
<div class="a" style="left:355px;top:486px;width:1px;height:20px;background:rgba(0,0,0,0.095)"></div>
<div class="a" style="left:419px;top:486px;width:1px;height:20px;background:rgba(0,0,0,0.095)"></div>
<div class="a" style="left:484px;top:486px;width:1px;height:20px;background:rgba(0,0,0,0.095)"></div>
<div class="a" style="left:549px;top:486px;width:1px;height:20px;background:rgba(0,0,0,0.095)"></div>
<div class="a" style="left:614px;top:486px;width:1px;height:20px;background:rgba(0,0,0,0.095)"></div>
<div class="a" style="left:679px;top:486px;width:1px;height:20px;background:rgba(0,0,0,0.095)"></div>
<div class="a" style="left:743px;top:486px;width:1px;height:20px;background:rgba(0,0,0,0.095)"></div>
<div class="a" style="left:808px;top:486px;width:1px;height:20px;background:rgba(0,0,0,0.095)"></div>
<div class="a" style="left:873px;top:486px;width:1px;height:20px;background:rgba(0,0,0,0.095)"></div>
<div class="a" style="left:938px;top:486px;width:1px;height:20px;background:rgba(0,0,0,0.095)"></div>
<div class="a" style="left:1003px;top:486px;width:1px;height:20px;background:rgba(0,0,0,0.095)"></div>
<div class="a" style="left:1068px;top:486px;width:1px;height:20px;background:rgba(0,0,0,0.095)"></div>
<div class="a" style="left:1132px;top:486px;width:1px;height:20px;background:rgba(0,0,0,0.095)"></div>
<div class="a" style="left:1197px;top:486px;width:1px;height:20px;background:rgba(0,0,0,0.095)"></div>
<div class="a" style="left:6px;top:506px;width:276px;height:20px;background:#e4eaf3"></div>
<div class="a" style="left:8px;top:506px;width:274px;height:1px;background:#d3dae4"></div>
<div class="a" style="left:6px;top:506px;width:2px;height:20px;background:#dde2e9"></div>
<div class="a" style="left:281px;top:506px;width:1px;height:20px;background:#d9dfe8"></div>
<div class="a" style="left:33.00px;top:506.07px;width:250.00px;height:20.00px;color:#3e3e3e;font-size:8.45px;transform:scaleX(0.947);transform-origin:left 50%;white-space:nowrap;line-height:20px">koszt pracodawcy</div>
<div class="a" style="left:285px;top:506px;width:66px;height:20px;background:#fcfcfd"></div>
<div class="a" style="left:285px;top:506px;width:66px;height:1px;background:rgba(0,0,0,0.095)"></div>
<div class="a" style="left:285px;top:506px;width:1px;height:20px;background:rgba(0,0,0,0.095)"></div>
<div class="a" style="left:350px;top:506px;width:1px;height:20px;background:rgba(0,0,0,0.095)"></div>
<div class="a" style="left:355px;top:506px;width:777px;height:20px;background:#fefdc8"></div>
<div class="a" style="left:1132px;top:506px;width:66px;height:20px;background:#eef4fc"></div>
<div class="a" style="left:355px;top:506px;width:843px;height:1px;background:rgba(0,0,0,0.095)"></div>
<div class="a" style="left:355px;top:506px;width:1px;height:20px;background:rgba(0,0,0,0.095)"></div>
<div class="a" style="left:419px;top:506px;width:1px;height:20px;background:rgba(0,0,0,0.095)"></div>
<div class="a" style="left:484px;top:506px;width:1px;height:20px;background:rgba(0,0,0,0.095)"></div>
<div class="a" style="left:549px;top:506px;width:1px;height:20px;background:rgba(0,0,0,0.095)"></div>
<div class="a" style="left:614px;top:506px;width:1px;height:20px;background:rgba(0,0,0,0.095)"></div>
<div class="a" style="left:679px;top:506px;width:1px;height:20px;background:rgba(0,0,0,0.095)"></div>
<div class="a" style="left:743px;top:506px;width:1px;height:20px;background:rgba(0,0,0,0.095)"></div>
<div class="a" style="left:808px;top:506px;width:1px;height:20px;background:rgba(0,0,0,0.095)"></div>
<div class="a" style="left:873px;top:506px;width:1px;height:20px;background:rgba(0,0,0,0.095)"></div>
<div class="a" style="left:938px;top:506px;width:1px;height:20px;background:rgba(0,0,0,0.095)"></div>
<div class="a" style="left:1003px;top:506px;width:1px;height:20px;background:rgba(0,0,0,0.095)"></div>
<div class="a" style="left:1068px;top:506px;width:1px;height:20px;background:rgba(0,0,0,0.095)"></div>
<div class="a" style="left:1132px;top:506px;width:1px;height:20px;background:rgba(0,0,0,0.095)"></div>
<div class="a" style="left:1197px;top:506px;width:1px;height:20px;background:rgba(0,0,0,0.095)"></div>
<div class="a" style="left:6px;top:526px;width:276px;height:20px;background:#e4eaf3"></div>
<div class="a" style="left:8px;top:526px;width:274px;height:1px;background:#d3dae4"></div>
<div class="a" style="left:6px;top:526px;width:2px;height:20px;background:#dde2e9"></div>
<div class="a" style="left:281px;top:526px;width:1px;height:20px;background:#d9dfe8"></div>
<svg class="a" style="left:16px;top:533px" width="8" height="8" viewBox="0 0 8 8"><rect x="0" y="0" width="8" height="8" rx="1.5" fill="#2b5687"/><rect x="1.5" y="3" width="5" height="2" fill="#fff"/></svg>
<div class="a" style="left:26.00px;top:526.32px;width:250.00px;height:20.00px;font-weight:bold;color:#2a2a2a;font-size:8.45px;transform:scaleX(0.947);transform-origin:left 50%;white-space:nowrap;line-height:20px">bonusy/nagrody uznaniowe razem</div>
<div class="a" style="left:285px;top:526px;width:66px;height:20px;background:#eef4fc"></div>
<div class="a" style="left:285px;top:526px;width:66px;height:1px;background:rgba(0,0,0,0.095)"></div>
<div class="a" style="left:285px;top:526px;width:1px;height:20px;background:rgba(0,0,0,0.095)"></div>
<div class="a" style="left:350px;top:526px;width:1px;height:20px;background:rgba(0,0,0,0.095)"></div>
<div class="a" style="left:355px;top:526px;width:777px;height:20px;background:#eef4fc"></div>
<div class="a" style="left:1132px;top:526px;width:66px;height:20px;background:#eef4fc"></div>
<div class="a" style="left:355px;top:526px;width:843px;height:1px;background:rgba(0,0,0,0.095)"></div>
<div class="a" style="left:355px;top:526px;width:1px;height:20px;background:rgba(0,0,0,0.095)"></div>
<div class="a" style="left:419px;top:526px;width:1px;height:20px;background:rgba(0,0,0,0.095)"></div>
<div class="a" style="left:484px;top:526px;width:1px;height:20px;background:rgba(0,0,0,0.095)"></div>
<div class="a" style="left:549px;top:526px;width:1px;height:20px;background:rgba(0,0,0,0.095)"></div>
<div class="a" style="left:614px;top:526px;width:1px;height:20px;background:rgba(0,0,0,0.095)"></div>
<div class="a" style="left:679px;top:526px;width:1px;height:20px;background:rgba(0,0,0,0.095)"></div>
<div class="a" style="left:743px;top:526px;width:1px;height:20px;background:rgba(0,0,0,0.095)"></div>
<div class="a" style="left:808px;top:526px;width:1px;height:20px;background:rgba(0,0,0,0.095)"></div>
<div class="a" style="left:873px;top:526px;width:1px;height:20px;background:rgba(0,0,0,0.095)"></div>
<div class="a" style="left:938px;top:526px;width:1px;height:20px;background:rgba(0,0,0,0.095)"></div>
<div class="a" style="left:1003px;top:526px;width:1px;height:20px;background:rgba(0,0,0,0.095)"></div>
<div class="a" style="left:1068px;top:526px;width:1px;height:20px;background:rgba(0,0,0,0.095)"></div>
<div class="a" style="left:1132px;top:526px;width:1px;height:20px;background:rgba(0,0,0,0.095)"></div>
<div class="a" style="left:1197px;top:526px;width:1px;height:20px;background:rgba(0,0,0,0.095)"></div>
<div class="a" style="left:484.14px;top:526.32px;width:61.32px;height:20.00px;font-size:8.45px;transform:scaleX(0.947);transform-origin:right 50%;white-space:nowrap;text-align:right;font-weight:bold;color:#2a2a2a;line-height:20px">2 875</div>
<div class="a" style="left:678.60px;top:526.32px;width:61.32px;height:20.00px;font-size:8.45px;transform:scaleX(0.947);transform-origin:right 50%;white-space:nowrap;text-align:right;font-weight:bold;color:#2a2a2a;line-height:20px">2 875</div>
<div class="a" style="left:873.06px;top:526.32px;width:61.32px;height:20.00px;font-size:8.45px;transform:scaleX(0.947);transform-origin:right 50%;white-space:nowrap;text-align:right;font-weight:bold;color:#2a2a2a;line-height:20px">2 875</div>
<div class="a" style="left:1067.52px;top:526.32px;width:61.32px;height:20.00px;font-size:8.45px;transform:scaleX(0.947);transform-origin:right 50%;white-space:nowrap;text-align:right;font-weight:bold;color:#2a2a2a;line-height:20px">5 750</div>
<div class="a" style="left:1132.34px;top:526.32px;width:61.32px;height:20.00px;font-size:8.45px;transform:scaleX(0.947);transform-origin:right 50%;white-space:nowrap;text-align:right;font-weight:bold;color:#2a2a2a;line-height:20px">14 376</div>
<div class="a" style="left:6px;top:546px;width:276px;height:21px;background:#e4eaf3"></div>
<div class="a" style="left:8px;top:546px;width:274px;height:1px;background:#d3dae4"></div>
<div class="a" style="left:6px;top:546px;width:2px;height:21px;background:#dde2e9"></div>
<div class="a" style="left:281px;top:546px;width:1px;height:21px;background:#d9dfe8"></div>
<div class="a" style="left:33.00px;top:546.57px;width:250.00px;height:20.00px;color:#3e3e3e;font-size:8.45px;transform:scaleX(0.947);transform-origin:left 50%;white-space:nowrap;line-height:20px">podstawa</div>
<div class="a" style="left:285px;top:546px;width:66px;height:21px;background:#fcfcfd"></div>
<div class="a" style="left:285px;top:546px;width:66px;height:1px;background:rgba(0,0,0,0.095)"></div>
<div class="a" style="left:285px;top:546px;width:1px;height:21px;background:rgba(0,0,0,0.095)"></div>
<div class="a" style="left:350px;top:546px;width:1px;height:21px;background:rgba(0,0,0,0.095)"></div>
<div class="a" style="left:355px;top:546px;width:777px;height:21px;background:#fefdc8"></div>
<div class="a" style="left:1132px;top:546px;width:66px;height:21px;background:#eef4fc"></div>
<div class="a" style="left:355px;top:546px;width:843px;height:1px;background:rgba(0,0,0,0.095)"></div>
<div class="a" style="left:355px;top:546px;width:1px;height:21px;background:rgba(0,0,0,0.095)"></div>
<div class="a" style="left:419px;top:546px;width:1px;height:21px;background:rgba(0,0,0,0.095)"></div>
<div class="a" style="left:484px;top:546px;width:1px;height:21px;background:rgba(0,0,0,0.095)"></div>
<div class="a" style="left:549px;top:546px;width:1px;height:21px;background:rgba(0,0,0,0.095)"></div>
<div class="a" style="left:614px;top:546px;width:1px;height:21px;background:rgba(0,0,0,0.095)"></div>
<div class="a" style="left:679px;top:546px;width:1px;height:21px;background:rgba(0,0,0,0.095)"></div>
<div class="a" style="left:743px;top:546px;width:1px;height:21px;background:rgba(0,0,0,0.095)"></div>
<div class="a" style="left:808px;top:546px;width:1px;height:21px;background:rgba(0,0,0,0.095)"></div>
<div class="a" style="left:873px;top:546px;width:1px;height:21px;background:rgba(0,0,0,0.095)"></div>
<div class="a" style="left:938px;top:546px;width:1px;height:21px;background:rgba(0,0,0,0.095)"></div>
<div class="a" style="left:1003px;top:546px;width:1px;height:21px;background:rgba(0,0,0,0.095)"></div>
<div class="a" style="left:1068px;top:546px;width:1px;height:21px;background:rgba(0,0,0,0.095)"></div>
<div class="a" style="left:1132px;top:546px;width:1px;height:21px;background:rgba(0,0,0,0.095)"></div>
<div class="a" style="left:1197px;top:546px;width:1px;height:21px;background:rgba(0,0,0,0.095)"></div>
<div class="a" style="left:484.14px;top:546.57px;width:61.32px;height:20.00px;font-size:8.45px;transform:scaleX(0.947);transform-origin:right 50%;white-space:nowrap;text-align:right;color:#3e3e3e;line-height:20px">2 400</div>
<div class="a" style="left:678.60px;top:546.57px;width:61.32px;height:20.00px;font-size:8.45px;transform:scaleX(0.947);transform-origin:right 50%;white-space:nowrap;text-align:right;color:#3e3e3e;line-height:20px">2 400</div>
<div class="a" style="left:873.06px;top:546.57px;width:61.32px;height:20.00px;font-size:8.45px;transform:scaleX(0.947);transform-origin:right 50%;white-space:nowrap;text-align:right;color:#3e3e3e;line-height:20px">2 400</div>
<div class="a" style="left:1067.52px;top:546.57px;width:61.32px;height:20.00px;font-size:8.45px;transform:scaleX(0.947);transform-origin:right 50%;white-space:nowrap;text-align:right;color:#3e3e3e;line-height:20px">4 800</div>
<div class="a" style="left:1132.34px;top:546.57px;width:61.32px;height:20.00px;font-size:8.45px;transform:scaleX(0.947);transform-origin:right 50%;white-space:nowrap;text-align:right;font-weight:bold;color:#2a2a2a;line-height:20px">12 000</div>
<div class="a" style="left:6px;top:567px;width:276px;height:20px;background:#e4eaf3"></div>
<div class="a" style="left:8px;top:567px;width:274px;height:1px;background:#d3dae4"></div>
<div class="a" style="left:6px;top:567px;width:2px;height:20px;background:#dde2e9"></div>
<div class="a" style="left:281px;top:567px;width:1px;height:20px;background:#d9dfe8"></div>
<div class="a" style="left:33.00px;top:566.82px;width:250.00px;height:20.00px;color:#3e3e3e;font-size:8.45px;transform:scaleX(0.947);transform-origin:left 50%;white-space:nowrap;line-height:20px">koszt pracodawcy</div>
<div class="a" style="left:285px;top:567px;width:66px;height:20px;background:#fcfcfd"></div>
<div class="a" style="left:285px;top:567px;width:66px;height:1px;background:rgba(0,0,0,0.095)"></div>
<div class="a" style="left:285px;top:567px;width:1px;height:20px;background:rgba(0,0,0,0.095)"></div>
<div class="a" style="left:350px;top:567px;width:1px;height:20px;background:rgba(0,0,0,0.095)"></div>
<div class="a" style="left:355px;top:567px;width:777px;height:20px;background:#fefdc8"></div>
<div class="a" style="left:1132px;top:567px;width:66px;height:20px;background:#eef4fc"></div>
<div class="a" style="left:355px;top:567px;width:843px;height:1px;background:rgba(0,0,0,0.095)"></div>
<div class="a" style="left:355px;top:567px;width:1px;height:20px;background:rgba(0,0,0,0.095)"></div>
<div class="a" style="left:419px;top:567px;width:1px;height:20px;background:rgba(0,0,0,0.095)"></div>
<div class="a" style="left:484px;top:567px;width:1px;height:20px;background:rgba(0,0,0,0.095)"></div>
<div class="a" style="left:549px;top:567px;width:1px;height:20px;background:rgba(0,0,0,0.095)"></div>
<div class="a" style="left:614px;top:567px;width:1px;height:20px;background:rgba(0,0,0,0.095)"></div>
<div class="a" style="left:679px;top:567px;width:1px;height:20px;background:rgba(0,0,0,0.095)"></div>
<div class="a" style="left:743px;top:567px;width:1px;height:20px;background:rgba(0,0,0,0.095)"></div>
<div class="a" style="left:808px;top:567px;width:1px;height:20px;background:rgba(0,0,0,0.095)"></div>
<div class="a" style="left:873px;top:567px;width:1px;height:20px;background:rgba(0,0,0,0.095)"></div>
<div class="a" style="left:938px;top:567px;width:1px;height:20px;background:rgba(0,0,0,0.095)"></div>
<div class="a" style="left:1003px;top:567px;width:1px;height:20px;background:rgba(0,0,0,0.095)"></div>
<div class="a" style="left:1068px;top:567px;width:1px;height:20px;background:rgba(0,0,0,0.095)"></div>
<div class="a" style="left:1132px;top:567px;width:1px;height:20px;background:rgba(0,0,0,0.095)"></div>
<div class="a" style="left:1197px;top:567px;width:1px;height:20px;background:rgba(0,0,0,0.095)"></div>
<div class="a" style="left:484.14px;top:566.82px;width:61.32px;height:20.00px;font-size:8.45px;transform:scaleX(0.947);transform-origin:right 50%;white-space:nowrap;text-align:right;color:#3e3e3e;line-height:20px">475</div>
<div class="a" style="left:678.60px;top:566.82px;width:61.32px;height:20.00px;font-size:8.45px;transform:scaleX(0.947);transform-origin:right 50%;white-space:nowrap;text-align:right;color:#3e3e3e;line-height:20px">475</div>
<div class="a" style="left:873.06px;top:566.82px;width:61.32px;height:20.00px;font-size:8.45px;transform:scaleX(0.947);transform-origin:right 50%;white-space:nowrap;text-align:right;color:#3e3e3e;line-height:20px">475</div>
<div class="a" style="left:1067.52px;top:566.82px;width:61.32px;height:20.00px;font-size:8.45px;transform:scaleX(0.947);transform-origin:right 50%;white-space:nowrap;text-align:right;color:#3e3e3e;line-height:20px">950</div>
<div class="a" style="left:1132.34px;top:566.82px;width:61.32px;height:20.00px;font-size:8.45px;transform:scaleX(0.947);transform-origin:right 50%;white-space:nowrap;text-align:right;font-weight:bold;color:#2a2a2a;line-height:20px">2 376</div>
<div class="a" style="left:7px;top:275px;width:275px;height:4px;background:#bfd0ec"></div>
<div class="a" style="left:6px;top:151px;width:276px;height:1px;background:#d3dae4"></div>
<div class="a" style="left:285px;top:151px;width:66px;height:1px;background:rgba(0,0,0,0.095)"></div>
<div class="a" style="left:355px;top:151px;width:843px;height:1px;background:rgba(0,0,0,0.095)"></div>
<div class="a" style="left:6px;top:338px;width:276px;height:1px;background:#d3dae4"></div>
<div class="a" style="left:285px;top:338px;width:66px;height:1px;background:rgba(0,0,0,0.095)"></div>
<div class="a" style="left:355px;top:338px;width:843px;height:1px;background:rgba(0,0,0,0.095)"></div>
<div class="a" style="left:6px;top:587px;width:276px;height:1px;background:#d3dae4"></div>
<div class="a" style="left:285px;top:587px;width:66px;height:1px;background:rgba(0,0,0,0.095)"></div>
<div class="a" style="left:355px;top:587px;width:843px;height:1px;background:rgba(0,0,0,0.095)"></div></body></html>
